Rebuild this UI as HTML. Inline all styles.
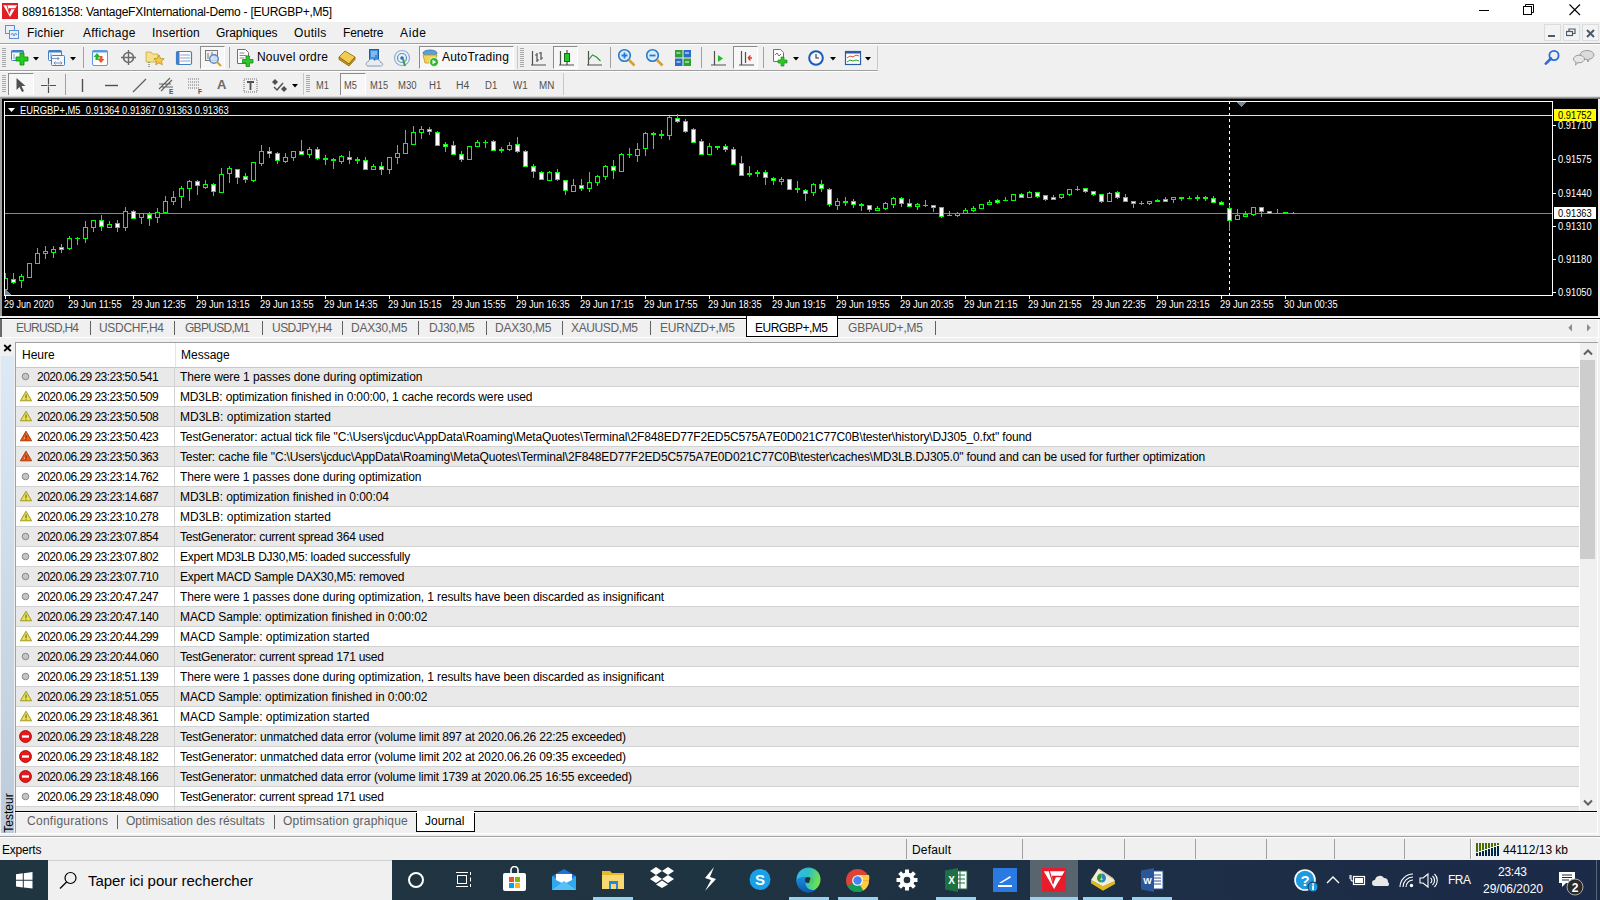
<!DOCTYPE html><html><head><meta charset="utf-8"><title>MT4</title><style>
*{margin:0;padding:0;box-sizing:border-box}
html,body{width:1600px;height:900px;overflow:hidden}
body{position:relative;background:#f0f0f0;font-family:"Liberation Sans",sans-serif;font-size:12px;color:#000}
.a{position:absolute;white-space:nowrap}
.t{position:absolute;white-space:nowrap;line-height:14px}
</style></head><body><div class="a" style="left:0;top:0;width:1600px;height:22px;background:#fff"></div><div class="a" style="left:2px;top:3px;width:16px;height:16px;background:#e31b23"></div><svg class="a" style="left:2px;top:3px" width="16" height="16" viewBox="0 0 24 24"><path d="M1.8 3.2H22.6L12.1 21Z" fill="#fff"/><path d="M9.9 7.8H20.6L19.9 9.3H13.9L11.3 15.8Z" fill="#e31b23"/><path d="M7.3 3L11.2 16" stroke="#e31b23" stroke-width="1.3"/></svg><div class="a" style="left:1479px;top:10px;width:10px;height:1px;background:#000"></div><svg class="a" style="left:1523px;top:4px" width="12" height="12"><rect x="0.5" y="2.5" width="8" height="8" fill="none" stroke="#000"/><path d="M2.5 2.5V0.5H10.5V8.5H8.5" fill="none" stroke="#000"/></svg><svg class="a" style="left:1569px;top:4px" width="12" height="12"><path d="M0.5 0.5L11 11M11 0.5L0.5 11" stroke="#000" stroke-width="1.1"/></svg><div class="a" style="left:0;top:22px;width:1600px;height:21px;background:#f0f0f0"></div><svg class="a" style="left:4px;top:24px" width="16" height="16"><rect x="1.5" y="1.5" width="9" height="8" fill="#e8f0fa" stroke="#5b8fd6"/><rect x="5.5" y="6.5" width="9" height="8" fill="#e8f0fa" stroke="#5b8fd6"/><path d="M7 11 l1.5 -2 l1.5 3 l1.5 -3 l1.5 2" stroke="#5b8fd6" fill="none"/></svg><div class="a" style="left:1544px;top:24px;width:17px;height:17px;border:1px solid #dcdcdc;background:#f3f3f3"></div><div class="a" style="left:1563px;top:24px;width:17px;height:17px;border:1px solid #dcdcdc;background:#f3f3f3"></div><div class="a" style="left:1582px;top:24px;width:17px;height:17px;border:1px solid #dcdcdc;background:#f3f3f3"></div><div class="a" style="left:1548px;top:35px;width:7px;height:2px;background:#4a5a6a"></div><svg class="a" style="left:1566px;top:28px" width="10" height="10"><rect x="0.5" y="3.5" width="6" height="4" fill="none" stroke="#4a5a6a" stroke-width="1.2"/><path d="M3 3.5V1H9V5.5H6.5" fill="none" stroke="#4a5a6a" stroke-width="1.2"/></svg><svg class="a" style="left:1586px;top:29px" width="9" height="9"><path d="M1 1L8 8M8 1L1 8" stroke="#4a5a6a" stroke-width="2"/></svg><div class="a" style="left:0;top:43px;width:1600px;height:1px;background:#a0a0a0"></div><div class="a" style="left:0;top:44px;width:1600px;height:1px;background:#fff"></div><div class="a" style="left:0;top:70px;width:878px;height:1px;background:#a0a0a0"></div><div class="a" style="left:0;top:71px;width:878px;height:1px;background:#fff"></div><div class="t" style="left:22px;top:5px;line-height:14px;letter-spacing:-0.248px;">889161358: VantageFXInternational-Demo - [EURGBP+,M5]</div><div class="t" style="left:27px;top:26px;line-height:14px;letter-spacing:0.164px;">Fichier</div><div class="t" style="left:83px;top:26px;line-height:14px;letter-spacing:0.338px;">Affichage</div><div class="t" style="left:152px;top:26px;line-height:14px;letter-spacing:0.217px;">Insertion</div><div class="t" style="left:216px;top:26px;line-height:14px;letter-spacing:-0.059px;">Graphiques</div><div class="t" style="left:294px;top:26px;line-height:14px;letter-spacing:0.316px;">Outils</div><div class="t" style="left:343px;top:26px;line-height:14px;letter-spacing:-0.141px;">Fenetre</div><div class="t" style="left:400px;top:26px;line-height:14px;letter-spacing:0.661px;">Aide</div><div class="a" style="left:2px;top:48px;width:4px;height:1px;background:#a8a8a8"></div><div class="a" style="left:2px;top:50px;width:4px;height:1px;background:#a8a8a8"></div><div class="a" style="left:2px;top:52px;width:4px;height:1px;background:#a8a8a8"></div><div class="a" style="left:2px;top:54px;width:4px;height:1px;background:#a8a8a8"></div><div class="a" style="left:2px;top:56px;width:4px;height:1px;background:#a8a8a8"></div><div class="a" style="left:2px;top:58px;width:4px;height:1px;background:#a8a8a8"></div><div class="a" style="left:2px;top:60px;width:4px;height:1px;background:#a8a8a8"></div><div class="a" style="left:2px;top:62px;width:4px;height:1px;background:#a8a8a8"></div><div class="a" style="left:2px;top:64px;width:4px;height:1px;background:#a8a8a8"></div><div class="a" style="left:2px;top:66px;width:4px;height:1px;background:#a8a8a8"></div><svg class="a" style="left:10px;top:49px" width="20" height="18" viewBox="0 0 20 18"><rect x="1.5" y="1.5" width="12" height="10" rx="1" fill="#f4f8fc" stroke="#3f7fc6"/><rect x="1.5" y="1.5" width="12" height="2" fill="#3f7fc6"/><path d="M4 5v5" stroke="#8aa0b8"/><path d="M10 4h4v4h4v4h-4v4h-4v-4h-4v-4h4z" fill="#22cc22" stroke="#0a8a0a" stroke-width="0.8"/></svg><svg class="a" style="left:33px;top:57px" width="6" height="4"><path d="M0 0H6L3 3.5Z" fill="#000"/></svg><svg class="a" style="left:47px;top:49px" width="20" height="19" viewBox="0 0 20 19"><rect x="1.5" y="1.5" width="13" height="10" rx="1" fill="#f4f8fc" stroke="#3f7fc6"/><rect x="1.5" y="1.5" width="13" height="2" fill="#3f7fc6"/><rect x="4.5" y="6.5" width="13" height="10" rx="1" fill="#f4f8fc" stroke="#3f7fc6"/><path d="M4 4.5v5M4 9.5h8M10.5 8l1.5 1.5-1.5 1.5M7 14h8M8.5 12.5L7 14l1.5 1.5M13.5 12.5l1.5 1.5-1.5 1.5" stroke="#6a8ab0" fill="none" stroke-width="0.9"/></svg><svg class="a" style="left:70px;top:57px" width="6" height="4"><path d="M0 0H6L3 3.5Z" fill="#000"/></svg><div class="a" style="left:83px;top:47px;width:1px;height:21px;background:#a0a0a0"></div><svg class="a" style="left:91px;top:49px" width="18" height="18" viewBox="0 0 18 18"><rect x="1.5" y="1.5" width="15" height="15" rx="1.5" fill="#fff" stroke="#5a9ae0"/><rect x="1.5" y="1.5" width="15" height="2" fill="#5a9ae0"/><path d="M6 4l3.5 4h-2v3h-3v-3h-2z" fill="#2ab52a"/><path d="M10 14l3.5-4h-2v-3h-3v3h-2z" fill="#e55a2a"/></svg><svg class="a" style="left:120px;top:49px" width="18" height="18" viewBox="0 0 18 18"><circle cx="8.5" cy="8.5" r="5" fill="none" stroke="#6a6a6a" stroke-width="1.6"/><path d="M8.5 1v15M1 8.5h15" stroke="#6a6a6a" stroke-width="1.4"/></svg><svg class="a" style="left:145px;top:49px" width="21" height="19" viewBox="0 0 21 19"><path d="M1 3h5l1.5 2H13v8H1z" fill="#f7e08a" stroke="#c8a83a" stroke-width="0.8"/><path d="M14 6l1.6 3.4 3.6.4-2.7 2.4.8 3.6-3.3-1.9-3.3 1.9.8-3.6-2.7-2.4 3.6-.4z" fill="#f5c84a" stroke="#b8902a" stroke-width="0.8"/><path d="M4 13v5" stroke="#555" stroke-dasharray="1 1"/></svg><svg class="a" style="left:175px;top:50px" width="18" height="17" viewBox="0 0 18 17"><rect x="1.5" y="1.5" width="15" height="13" rx="1.5" fill="#fff" stroke="#3f7fc6" stroke-width="1.2"/><rect x="1.5" y="1.5" width="3" height="13" fill="#3f7fc6"/><path d="M7 5h8M7 8h8M7 11h8" stroke="#7aa6d8"/><path d="M5.5 5h1M5.5 8h1M5.5 11h1" stroke="#d22"/></svg><div class="a" style="left:200px;top:46px;width:25px;height:23px;border-top:1px solid #8c8c8c;border-left:1px solid #8c8c8c;border-right:1px solid #fff;border-bottom:1px solid #fff;background:#f7f7f7"></div><svg class="a" style="left:204px;top:49px" width="19" height="19" viewBox="0 0 19 19"><rect x="1.5" y="1.5" width="12" height="10" fill="#f0f0f0" stroke="#7a7a7a"/><path d="M4 4v6M8 3v5M11 5v5" stroke="#7a7a7a"/><circle cx="10" cy="10" r="4.3" fill="#cfe0f4" fill-opacity="0.8" stroke="#5a8ac8" stroke-width="1.4"/><path d="M13 13l4 4" stroke="#d8a030" stroke-width="2"/></svg><div class="a" style="left:229px;top:47px;width:1px;height:21px;background:#a0a0a0"></div><svg class="a" style="left:236px;top:48px" width="20" height="20" viewBox="0 0 20 20"><path d="M1.5 1.5h8l3 3v11h-11z" fill="#fff" stroke="#707070"/><path d="M3.5 5h5M3.5 7.5h7M3.5 10h5" stroke="#8a8a8a"/><path d="M10 8h3.5v3.5H17V15h-3.5v3.5H10V15H6.5v-3.5H10z" fill="#2ec52e" stroke="#139013" stroke-width="0.8"/></svg><div class="t" style="left:257px;top:50px;line-height:14px;letter-spacing:0.191px;">Nouvel ordre</div><svg class="a" style="left:338px;top:49px" width="18" height="18" viewBox="0 0 18 18"><path d="M1 8l6-6 10 6-6 7z" fill="#f0cc50" stroke="#9a7418" stroke-width="0.9"/><path d="M1 8v2.5l10 6.5 6-6.5V8l-6 7z" fill="#c89420" stroke="#8a6410" stroke-width="0.8"/></svg><svg class="a" style="left:365px;top:48px" width="19" height="19" viewBox="0 0 19 19"><rect x="4.5" y="1.5" width="9" height="10" fill="#3a8ee0" stroke="#1a5eb0"/><path d="M6 4h6M6 6h6M6 8h4" stroke="#cde4fa"/><path d="M3 18c-2.5 0-2.5-4.5 0.5-4.5 0.5-3 5-3.5 6-1 2-2 6-1 6 2 3 0 3 3.5 0 3.5z" fill="#e4ecf4" stroke="#8a9ab0"/></svg><svg class="a" style="left:393px;top:49px" width="19" height="18" viewBox="0 0 19 18"><circle cx="9" cy="9" r="7.5" fill="none" stroke="#8ab0d8" stroke-width="1.2"/><circle cx="9" cy="9" r="4.5" fill="none" stroke="#5a90c8" stroke-width="1.2"/><circle cx="9" cy="9" r="1.8" fill="#2a70b8"/><path d="M10 10l2 7" stroke="#3aa03a" stroke-width="2"/></svg><div class="a" style="left:419px;top:46px;width:95px;height:23px;border-top:1px solid #8c8c8c;border-left:1px solid #8c8c8c;border-right:1px solid #fff;border-bottom:1px solid #fff;background:#f7f7f7"></div><svg class="a" style="left:421px;top:48px" width="19" height="20" viewBox="0 0 19 20"><ellipse cx="9" cy="5" rx="7" ry="3" fill="#5aa0d8" stroke="#3a70a8" stroke-width="0.8"/><path d="M2 7h14l-2 8H4z" fill="#f2d25a" stroke="#b8982a" stroke-width="0.8"/><circle cx="13" cy="14" r="4.5" fill="#2fb82f" stroke="#fff" stroke-width="0.8"/><path d="M11.5 11.8v4.4l3.7-2.2z" fill="#fff"/></svg><div class="t" style="left:442px;top:50px;line-height:14px;letter-spacing:0.188px;">AutoTrading</div><div class="a" style="left:517px;top:46px;width:1px;height:23px;background:#c8c8c8"></div><div class="a" style="left:520px;top:48px;width:4px;height:1px;background:#a8a8a8"></div><div class="a" style="left:520px;top:50px;width:4px;height:1px;background:#a8a8a8"></div><div class="a" style="left:520px;top:52px;width:4px;height:1px;background:#a8a8a8"></div><div class="a" style="left:520px;top:54px;width:4px;height:1px;background:#a8a8a8"></div><div class="a" style="left:520px;top:56px;width:4px;height:1px;background:#a8a8a8"></div><div class="a" style="left:520px;top:58px;width:4px;height:1px;background:#a8a8a8"></div><div class="a" style="left:520px;top:60px;width:4px;height:1px;background:#a8a8a8"></div><div class="a" style="left:520px;top:62px;width:4px;height:1px;background:#a8a8a8"></div><div class="a" style="left:520px;top:64px;width:4px;height:1px;background:#a8a8a8"></div><div class="a" style="left:520px;top:66px;width:4px;height:1px;background:#a8a8a8"></div><svg class="a" style="left:529px;top:49px" width="18" height="18" viewBox="0 0 18 18"><path d="M2 16h15M3.5 2v14" stroke="#505050" stroke-width="1.2"/><path d="M8 4v9M6 6h2M8 11h2M12 3v8M10 4h2M12 9h2" stroke="#505050" stroke-width="1.2"/></svg><div class="a" style="left:553px;top:46px;width:25px;height:23px;border-top:1px solid #8c8c8c;border-left:1px solid #8c8c8c;border-right:1px solid #fff;border-bottom:1px solid #fff;background:#f7f7f7"></div><svg class="a" style="left:557px;top:49px" width="18" height="18" viewBox="0 0 18 18"><path d="M2 16h15M3.5 2v14" stroke="#505050" stroke-width="1.2"/><path d="M10 1v15" stroke="#303030"/><rect x="7.5" y="4.5" width="5" height="8" fill="#22cc22" stroke="#107010"/></svg><svg class="a" style="left:585px;top:49px" width="18" height="18" viewBox="0 0 18 18"><path d="M2 16h15M3.5 2v14" stroke="#505050" stroke-width="1.2"/><path d="M3.5 11l4-5 4 2 4 4" fill="none" stroke="#2a9a2a" stroke-width="1.2"/></svg><div class="a" style="left:610px;top:47px;width:1px;height:21px;background:#a0a0a0"></div><svg class="a" style="left:617px;top:48px" width="20" height="20" viewBox="0 0 20 20"><circle cx="7.5" cy="7.5" r="5.8" fill="#d8ecfc" stroke="#2a7ac8" stroke-width="1.6"/><path d="M4.5 7.5h6M7.5 4.5v6" stroke="#2a7ac8" stroke-width="1.8"/><path d="M12 12l5.5 5.5" stroke="#d8a030" stroke-width="2.6"/></svg><svg class="a" style="left:645px;top:48px" width="20" height="20" viewBox="0 0 20 20"><circle cx="7.5" cy="7.5" r="5.8" fill="#d8ecfc" stroke="#2a7ac8" stroke-width="1.6"/><path d="M4.5 7.5h6" stroke="#2a7ac8" stroke-width="1.8"/><path d="M12 12l5.5 5.5" stroke="#d8a030" stroke-width="2.6"/></svg><svg class="a" style="left:674px;top:49px" width="18" height="18" viewBox="0 0 18 18"><rect x="1" y="1" width="7.5" height="7.5" fill="#2ea02e"/><rect x="9.5" y="1" width="7.5" height="7.5" fill="#2a6ac8"/><rect x="1" y="9.5" width="7.5" height="7.5" fill="#2a6ac8"/><rect x="9.5" y="9.5" width="7.5" height="7.5" fill="#2ea02e"/><path d="M2.5 4h4M11 4h4M2.5 13h4M11 13h4" stroke="#fff"/></svg><div class="a" style="left:701px;top:47px;width:1px;height:21px;background:#a0a0a0"></div><svg class="a" style="left:709px;top:49px" width="18" height="18" viewBox="0 0 18 18"><path d="M2 16h15M5.5 2v14" stroke="#505050" stroke-width="1.2"/><path d="M9 6v7l5-3.5z" fill="#22bb22"/></svg><div class="a" style="left:733px;top:46px;width:25px;height:23px;border-top:1px solid #8c8c8c;border-left:1px solid #8c8c8c;border-right:1px solid #fff;border-bottom:1px solid #fff;background:#f7f7f7"></div><svg class="a" style="left:737px;top:49px" width="18" height="18" viewBox="0 0 18 18"><path d="M2 16h15M4.5 2v14M8.5 3v11" stroke="#505050" stroke-width="1.2"/><path d="M15 9h-4M11 9l2.5-2.5M11 9l2.5 2.5" stroke="#d83a2a" stroke-width="1.3"/></svg><div class="a" style="left:763px;top:47px;width:1px;height:21px;background:#a0a0a0"></div><svg class="a" style="left:771px;top:48px" width="20" height="20" viewBox="0 0 20 20"><path d="M2.5 1.5h7l3 3v9h-10z" fill="#fff" stroke="#707070"/><path d="M4 7l2-2 2 3 2-2" stroke="#707070" fill="none"/><path d="M10 9h3v3h3v3h-3v3h-3v-3h-3v-3h3z" fill="#2ec52e" stroke="#139013" stroke-width="0.7"/></svg><svg class="a" style="left:793px;top:57px" width="6" height="4"><path d="M0 0H6L3 3.5Z" fill="#000"/></svg><svg class="a" style="left:807px;top:49px" width="18" height="18" viewBox="0 0 18 18"><circle cx="9" cy="9" r="7.8" fill="#1a5ab8"/><circle cx="9" cy="9" r="5.8" fill="#f6f8fc"/><path d="M9 5v4h3" stroke="#333" stroke-width="1.1" fill="none"/></svg><svg class="a" style="left:830px;top:57px" width="6" height="4"><path d="M0 0H6L3 3.5Z" fill="#000"/></svg><svg class="a" style="left:844px;top:49px" width="19" height="18" viewBox="0 0 19 18"><rect x="1.5" y="2.5" width="15" height="13" fill="#fff" stroke="#2a5aa8" stroke-width="1.2"/><rect x="1.5" y="2.5" width="15" height="2" fill="#2a5aa8"/><path d="M3 9l3-2 3 1 3-2 3 1" stroke="#d84a3a" fill="none"/><path d="M3 13l3-2 3 1 3-1 3 1" stroke="#2aa02a" fill="none"/></svg><svg class="a" style="left:865px;top:57px" width="6" height="4"><path d="M0 0H6L3 3.5Z" fill="#000"/></svg><div class="a" style="left:877px;top:46px;width:1px;height:23px;background:#c8c8c8"></div><svg class="a" style="left:1544px;top:49px" width="17" height="17" viewBox="0 0 17 17"><circle cx="10" cy="6.5" r="4.6" fill="none" stroke="#2a6ad8" stroke-width="1.8"/><path d="M7 9.5L1.8 14.7" stroke="#2a6ad8" stroke-width="2.6" stroke-linecap="round"/></svg><svg class="a" style="left:1572px;top:49px" width="24" height="17" viewBox="0 0 24 17"><ellipse cx="15" cy="6" rx="7" ry="4.5" fill="#dcdcdc" stroke="#9a9a9a"/><path d="M15 10l1 3 1.5-3.2" fill="#dcdcdc" stroke="#9a9a9a"/><ellipse cx="7" cy="10" rx="5.5" ry="3.8" fill="#e6e6e6" stroke="#9a9a9a"/><path d="M4 13l-0.5 3 2.5-2.4" fill="#e6e6e6" stroke="#9a9a9a"/></svg><div class="a" style="left:2px;top:75px;width:4px;height:1px;background:#a8a8a8"></div><div class="a" style="left:2px;top:77px;width:4px;height:1px;background:#a8a8a8"></div><div class="a" style="left:2px;top:79px;width:4px;height:1px;background:#a8a8a8"></div><div class="a" style="left:2px;top:81px;width:4px;height:1px;background:#a8a8a8"></div><div class="a" style="left:2px;top:83px;width:4px;height:1px;background:#a8a8a8"></div><div class="a" style="left:2px;top:85px;width:4px;height:1px;background:#a8a8a8"></div><div class="a" style="left:2px;top:87px;width:4px;height:1px;background:#a8a8a8"></div><div class="a" style="left:2px;top:89px;width:4px;height:1px;background:#a8a8a8"></div><div class="a" style="left:2px;top:91px;width:4px;height:1px;background:#a8a8a8"></div><div class="a" style="left:8px;top:73px;width:26px;height:23px;border-top:1px solid #8c8c8c;border-left:1px solid #8c8c8c;border-right:1px solid #fff;border-bottom:1px solid #fff;background:#f7f7f7"></div><svg class="a" style="left:15px;top:77px" width="11" height="16" viewBox="0 0 11 16"><path d="M1.5 1v12l3-3 2.5 5 2-1-2.5-5h4z" fill="#505050"/></svg><svg class="a" style="left:40px;top:77px" width="17" height="17" viewBox="0 0 17 17"><path d="M8.5 1v6.5M8.5 9.5v6.5M1 8.5h6.5M9.5 8.5h6.5" stroke="#505050" stroke-width="1.2"/><rect x="8" y="8" width="1" height="1" fill="#505050"/></svg><div class="a" style="left:65px;top:74px;width:1px;height:21px;background:#a0a0a0"></div><svg class="a" style="left:81px;top:78px" width="3" height="15" viewBox="0 0 3 15"><path d="M1.5 1v13" stroke="#505050" stroke-width="1.4"/></svg><svg class="a" style="left:104px;top:84px" width="15" height="3" viewBox="0 0 15 3"><path d="M1 1.5h13" stroke="#505050" stroke-width="1.4"/></svg><svg class="a" style="left:132px;top:78px" width="15" height="15" viewBox="0 0 15 15"><path d="M1 14L14 1" stroke="#606060" stroke-width="1.3"/></svg><svg class="a" style="left:158px;top:76px" width="18" height="19" viewBox="0 0 18 19"><path d="M1 13L12 2M3 15L14 4M1 8h12M3 11h12" stroke="#606060" stroke-width="1.1"/><text x="11" y="18" font-size="6.5" font-weight="bold" fill="#505050" font-family="Liberation Sans">E</text></svg><svg class="a" style="left:187px;top:77px" width="17" height="18" viewBox="0 0 17 18"><path d="M1 2h12M1 5h12M1 8h12M1 11h12" stroke="#707070" stroke-dasharray="1 1"/><text x="11" y="17" font-size="6.5" font-weight="bold" fill="#505050" font-family="Liberation Sans">F</text></svg><div class="t" style="left:217px;top:78px;font-size:13px;font-weight:bold;color:#6a6a6a">A</div><svg class="a" style="left:243px;top:78px" width="16" height="15" viewBox="0 0 16 15"><rect x="1" y="1" width="13" height="13" fill="none" stroke="#707070" stroke-dasharray="1 1"/><path d="M4 4h7M7.5 4v8" stroke="#505050" stroke-width="1.8"/></svg><svg class="a" style="left:271px;top:78px" width="17" height="15" viewBox="0 0 17 15"><path d="M4 1l3 3-3 3-3-3z" fill="#505050"/><path d="M13 8l3 3-3 3-3-3z" fill="#505050"/><path d="M3 9l3 3 6-7" stroke="#505050" stroke-width="1.4" fill="none"/></svg><svg class="a" style="left:292px;top:84px" width="6" height="4"><path d="M0 0H6L3 3.5Z" fill="#000"/></svg><div class="a" style="left:303px;top:73px;width:1px;height:23px;background:#c8c8c8"></div><div class="a" style="left:306px;top:75px;width:4px;height:1px;background:#a8a8a8"></div><div class="a" style="left:306px;top:77px;width:4px;height:1px;background:#a8a8a8"></div><div class="a" style="left:306px;top:79px;width:4px;height:1px;background:#a8a8a8"></div><div class="a" style="left:306px;top:81px;width:4px;height:1px;background:#a8a8a8"></div><div class="a" style="left:306px;top:83px;width:4px;height:1px;background:#a8a8a8"></div><div class="a" style="left:306px;top:85px;width:4px;height:1px;background:#a8a8a8"></div><div class="a" style="left:306px;top:87px;width:4px;height:1px;background:#a8a8a8"></div><div class="a" style="left:306px;top:89px;width:4px;height:1px;background:#a8a8a8"></div><div class="a" style="left:306px;top:91px;width:4px;height:1px;background:#a8a8a8"></div><div class="a" style="left:340px;top:73px;width:26px;height:23px;border-top:1px solid #8c8c8c;border-left:1px solid #8c8c8c;border-right:1px solid #fff;border-bottom:1px solid #fff;background:#f7f7f7"></div><div class="t" style="left:316.0px;top:79px;line-height:14px;font-size:10px;color:#505050;transform:scaleX(0.9287);transform-origin:0 0;">M1</div><div class="t" style="left:344.0px;top:79px;line-height:14px;font-size:10px;color:#505050;transform:scaleX(0.9287);transform-origin:0 0;">M5</div><div class="t" style="left:370.0px;top:79px;line-height:14px;font-size:10px;color:#505050;transform:scaleX(0.9304);transform-origin:0 0;">M15</div><div class="t" style="left:398.0px;top:79px;line-height:14px;font-size:10px;color:#505050;transform:scaleX(0.9510);transform-origin:0 0;">M30</div><div class="t" style="left:429.0px;top:79px;line-height:14px;font-size:10px;color:#505050;transform:scaleX(0.9623);transform-origin:0 0;">H1</div><div class="t" style="left:456.0px;top:79px;line-height:14px;font-size:10px;color:#505050;transform:scaleX(1.0406);transform-origin:0 0;">H4</div><div class="t" style="left:485.0px;top:79px;line-height:14px;font-size:10px;color:#505050;transform:scaleX(0.9623);transform-origin:0 0;">D1</div><div class="t" style="left:512.5px;top:79px;line-height:14px;font-size:10px;color:#505050;transform:scaleX(0.9800);transform-origin:0 0;">W1</div><div class="t" style="left:539.0px;top:79px;line-height:14px;font-size:10px;color:#505050;transform:scaleX(0.9841);transform-origin:0 0;">MN</div><div class="a" style="left:563px;top:73px;width:1px;height:23px;background:#c8c8c8"></div><div class="a" style="left:0;top:95px;width:1600px;height:224px;background:#f0f0f0"></div><div class="a" style="left:0;top:96px;width:1600px;height:1px;background:#dadada"></div><div class="a" style="left:0;top:97px;width:1600px;height:1px;background:#a0a0a0"></div><div class="a" style="left:0;top:98px;width:1600px;height:1px;background:#696969"></div><div class="a" style="left:0;top:97px;width:2px;height:221px;background:#a0a0a0"></div><div class="a" style="left:2px;top:99px;width:1596px;height:218px;background:#000"></div><div class="a" style="left:0;top:318px;width:1600px;height:1px;background:#000"></div><svg class="a" style="left:0;top:0" width="1600" height="320" shape-rendering="crispEdges"><defs><clipPath id="pc"><rect x="5" y="102" width="1547" height="193"/></clipPath></defs><rect x="4" y="101" width="1549" height="1" fill="#fff"/><rect x="4" y="295" width="1549" height="1" fill="#fff"/><rect x="4" y="101" width="1" height="195" fill="#fff"/><rect x="1552" y="101" width="1" height="195" fill="#fff"/><g clip-path="url(#pc)"><rect x="5" y="115" width="1547" height="1" fill="#ffff00"/><rect x="5" y="213" width="1547" height="1" fill="#778899"/><rect x="1229" y="101" width="1" height="3" fill="#fff"/><rect x="1229" y="107" width="1" height="3" fill="#fff"/><rect x="1229" y="113" width="1" height="3" fill="#fff"/><rect x="1229" y="119" width="1" height="3" fill="#fff"/><rect x="1229" y="125" width="1" height="3" fill="#fff"/><rect x="1229" y="131" width="1" height="3" fill="#fff"/><rect x="1229" y="137" width="1" height="3" fill="#fff"/><rect x="1229" y="143" width="1" height="3" fill="#fff"/><rect x="1229" y="149" width="1" height="3" fill="#fff"/><rect x="1229" y="155" width="1" height="3" fill="#fff"/><rect x="1229" y="161" width="1" height="3" fill="#fff"/><rect x="1229" y="167" width="1" height="3" fill="#fff"/><rect x="1229" y="173" width="1" height="3" fill="#fff"/><rect x="1229" y="179" width="1" height="3" fill="#fff"/><rect x="1229" y="185" width="1" height="3" fill="#fff"/><rect x="1229" y="191" width="1" height="3" fill="#fff"/><rect x="1229" y="197" width="1" height="3" fill="#fff"/><rect x="1229" y="203" width="1" height="3" fill="#fff"/><rect x="1229" y="209" width="1" height="3" fill="#fff"/><rect x="1229" y="215" width="1" height="3" fill="#fff"/><rect x="1229" y="221" width="1" height="3" fill="#fff"/><rect x="1229" y="227" width="1" height="3" fill="#fff"/><rect x="1229" y="233" width="1" height="3" fill="#fff"/><rect x="1229" y="239" width="1" height="3" fill="#fff"/><rect x="1229" y="245" width="1" height="3" fill="#fff"/><rect x="1229" y="251" width="1" height="3" fill="#fff"/><rect x="1229" y="257" width="1" height="3" fill="#fff"/><rect x="1229" y="263" width="1" height="3" fill="#fff"/><rect x="1229" y="269" width="1" height="3" fill="#fff"/><rect x="1229" y="275" width="1" height="3" fill="#fff"/><rect x="1229" y="281" width="1" height="3" fill="#fff"/><rect x="1229" y="287" width="1" height="3" fill="#fff"/><rect x="1229" y="293" width="1" height="3" fill="#fff"/><path d="M1236 102H1246L1241 107Z" fill="#778899"/><path d="M5 289V295H11Z" fill="#778899"/><rect x="5" y="273" width="1" height="17" fill="#00ff00"/><rect x="3" y="278" width="5" height="12" fill="#00ff00"/><rect x="4" y="279" width="3" height="10" fill="#000"/><rect x="13" y="273" width="1" height="11" fill="#00ff00"/><rect x="11" y="279" width="5" height="4" fill="#00ff00"/><rect x="12" y="280" width="3" height="2" fill="#fff"/><rect x="21" y="274" width="1" height="14" fill="#00ff00"/><rect x="19" y="276" width="5" height="5" fill="#00ff00"/><rect x="20" y="277" width="3" height="3" fill="#000"/><rect x="29" y="263" width="1" height="15" fill="#00ff00"/><rect x="27" y="263" width="5" height="15" fill="#00ff00"/><rect x="28" y="264" width="3" height="13" fill="#000"/><rect x="37" y="248" width="1" height="16" fill="#00ff00"/><rect x="35" y="253" width="5" height="11" fill="#00ff00"/><rect x="36" y="254" width="3" height="9" fill="#000"/><rect x="45" y="246" width="1" height="13" fill="#00ff00"/><rect x="43" y="251" width="5" height="3" fill="#00ff00"/><rect x="44" y="252" width="3" height="1" fill="#000"/><rect x="53" y="246" width="1" height="12" fill="#00ff00"/><rect x="51" y="249" width="5" height="4" fill="#00ff00"/><rect x="52" y="250" width="3" height="2" fill="#000"/><rect x="61" y="244" width="1" height="9" fill="#00ff00"/><rect x="59" y="247" width="5" height="3" fill="#00ff00"/><rect x="60" y="248" width="3" height="1" fill="#fff"/><rect x="69" y="236" width="1" height="14" fill="#00ff00"/><rect x="67" y="238" width="5" height="11" fill="#00ff00"/><rect x="68" y="239" width="3" height="9" fill="#000"/><rect x="77" y="237" width="1" height="8" fill="#00ff00"/><rect x="75" y="238" width="5" height="1" fill="#00ff00"/><rect x="85" y="221" width="1" height="22" fill="#00ff00"/><rect x="83" y="227" width="5" height="12" fill="#00ff00"/><rect x="84" y="228" width="3" height="10" fill="#000"/><rect x="93" y="220" width="1" height="12" fill="#00ff00"/><rect x="91" y="220" width="5" height="8" fill="#00ff00"/><rect x="92" y="221" width="3" height="6" fill="#000"/><rect x="101" y="215" width="1" height="16" fill="#00ff00"/><rect x="99" y="220" width="5" height="7" fill="#00ff00"/><rect x="100" y="221" width="3" height="5" fill="#fff"/><rect x="109" y="221" width="1" height="7" fill="#00ff00"/><rect x="107" y="224" width="5" height="4" fill="#00ff00"/><rect x="108" y="225" width="3" height="2" fill="#000"/><rect x="117" y="220" width="1" height="12" fill="#00ff00"/><rect x="115" y="223" width="5" height="5" fill="#00ff00"/><rect x="116" y="224" width="3" height="3" fill="#fff"/><rect x="125" y="207" width="1" height="24" fill="#00ff00"/><rect x="123" y="211" width="5" height="17" fill="#00ff00"/><rect x="124" y="212" width="3" height="15" fill="#000"/><rect x="133" y="210" width="1" height="9" fill="#00ff00"/><rect x="131" y="211" width="5" height="8" fill="#00ff00"/><rect x="132" y="212" width="3" height="6" fill="#fff"/><rect x="141" y="213" width="1" height="11" fill="#00ff00"/><rect x="139" y="213" width="5" height="5" fill="#00ff00"/><rect x="140" y="214" width="3" height="3" fill="#000"/><rect x="149" y="212" width="1" height="14" fill="#00ff00"/><rect x="147" y="214" width="5" height="5" fill="#00ff00"/><rect x="148" y="215" width="3" height="3" fill="#fff"/><rect x="157" y="208" width="1" height="15" fill="#00ff00"/><rect x="155" y="212" width="5" height="6" fill="#00ff00"/><rect x="156" y="213" width="3" height="4" fill="#000"/><rect x="165" y="196" width="1" height="17" fill="#00ff00"/><rect x="163" y="201" width="5" height="12" fill="#00ff00"/><rect x="164" y="202" width="3" height="10" fill="#000"/><rect x="173" y="191" width="1" height="14" fill="#00ff00"/><rect x="171" y="197" width="5" height="5" fill="#00ff00"/><rect x="172" y="198" width="3" height="3" fill="#000"/><rect x="181" y="186" width="1" height="22" fill="#00ff00"/><rect x="179" y="188" width="5" height="9" fill="#00ff00"/><rect x="180" y="189" width="3" height="7" fill="#000"/><rect x="189" y="180" width="1" height="21" fill="#00ff00"/><rect x="187" y="181" width="5" height="8" fill="#00ff00"/><rect x="188" y="182" width="3" height="6" fill="#000"/><rect x="197" y="180" width="1" height="15" fill="#00ff00"/><rect x="195" y="181" width="5" height="5" fill="#00ff00"/><rect x="196" y="182" width="3" height="3" fill="#fff"/><rect x="205" y="180" width="1" height="9" fill="#00ff00"/><rect x="203" y="184" width="5" height="4" fill="#00ff00"/><rect x="204" y="185" width="3" height="2" fill="#000"/><rect x="213" y="183" width="1" height="13" fill="#00ff00"/><rect x="211" y="184" width="5" height="8" fill="#00ff00"/><rect x="212" y="185" width="3" height="6" fill="#fff"/><rect x="221" y="168" width="1" height="25" fill="#00ff00"/><rect x="219" y="174" width="5" height="19" fill="#00ff00"/><rect x="220" y="175" width="3" height="17" fill="#000"/><rect x="229" y="166" width="1" height="17" fill="#00ff00"/><rect x="227" y="168" width="5" height="6" fill="#00ff00"/><rect x="228" y="169" width="3" height="4" fill="#000"/><rect x="237" y="169" width="1" height="15" fill="#00ff00"/><rect x="235" y="169" width="5" height="9" fill="#00ff00"/><rect x="236" y="170" width="3" height="7" fill="#fff"/><rect x="245" y="173" width="1" height="10" fill="#00ff00"/><rect x="243" y="176" width="5" height="4" fill="#00ff00"/><rect x="244" y="177" width="3" height="2" fill="#fff"/><rect x="253" y="162" width="1" height="20" fill="#00ff00"/><rect x="251" y="162" width="5" height="19" fill="#00ff00"/><rect x="252" y="163" width="3" height="17" fill="#000"/><rect x="261" y="145" width="1" height="21" fill="#00ff00"/><rect x="259" y="151" width="5" height="13" fill="#00ff00"/><rect x="260" y="152" width="3" height="11" fill="#000"/><rect x="269" y="147" width="1" height="11" fill="#00ff00"/><rect x="267" y="151" width="5" height="3" fill="#00ff00"/><rect x="268" y="152" width="3" height="1" fill="#fff"/><rect x="277" y="152" width="1" height="12" fill="#00ff00"/><rect x="275" y="153" width="5" height="8" fill="#00ff00"/><rect x="276" y="154" width="3" height="6" fill="#fff"/><rect x="285" y="153" width="1" height="10" fill="#00ff00"/><rect x="283" y="157" width="5" height="5" fill="#00ff00"/><rect x="284" y="158" width="3" height="3" fill="#000"/><rect x="293" y="151" width="1" height="10" fill="#00ff00"/><rect x="291" y="151" width="5" height="7" fill="#00ff00"/><rect x="292" y="152" width="3" height="5" fill="#000"/><rect x="301" y="140" width="1" height="15" fill="#00ff00"/><rect x="299" y="151" width="5" height="4" fill="#00ff00"/><rect x="300" y="152" width="3" height="2" fill="#fff"/><rect x="309" y="147" width="1" height="11" fill="#00ff00"/><rect x="307" y="149" width="5" height="6" fill="#00ff00"/><rect x="308" y="150" width="3" height="4" fill="#000"/><rect x="317" y="147" width="1" height="13" fill="#00ff00"/><rect x="315" y="149" width="5" height="10" fill="#00ff00"/><rect x="316" y="150" width="3" height="8" fill="#fff"/><rect x="325" y="155" width="1" height="10" fill="#00ff00"/><rect x="323" y="158" width="5" height="2" fill="#00ff00"/><rect x="333" y="158" width="1" height="11" fill="#00ff00"/><rect x="331" y="159" width="5" height="2" fill="#00ff00"/><rect x="341" y="155" width="1" height="9" fill="#00ff00"/><rect x="339" y="156" width="5" height="6" fill="#00ff00"/><rect x="340" y="157" width="3" height="4" fill="#000"/><rect x="349" y="151" width="1" height="13" fill="#00ff00"/><rect x="347" y="157" width="5" height="3" fill="#00ff00"/><rect x="348" y="158" width="3" height="1" fill="#fff"/><rect x="357" y="157" width="1" height="7" fill="#00ff00"/><rect x="355" y="159" width="5" height="2" fill="#00ff00"/><rect x="365" y="157" width="1" height="13" fill="#00ff00"/><rect x="363" y="160" width="5" height="10" fill="#00ff00"/><rect x="364" y="161" width="3" height="8" fill="#fff"/><rect x="373" y="164" width="1" height="6" fill="#00ff00"/><rect x="371" y="166" width="5" height="4" fill="#00ff00"/><rect x="372" y="167" width="3" height="2" fill="#000"/><rect x="381" y="162" width="1" height="13" fill="#00ff00"/><rect x="379" y="166" width="5" height="4" fill="#00ff00"/><rect x="380" y="167" width="3" height="2" fill="#fff"/><rect x="389" y="157" width="1" height="17" fill="#00ff00"/><rect x="387" y="157" width="5" height="13" fill="#00ff00"/><rect x="388" y="158" width="3" height="11" fill="#000"/><rect x="397" y="145" width="1" height="19" fill="#00ff00"/><rect x="395" y="153" width="5" height="5" fill="#00ff00"/><rect x="396" y="154" width="3" height="3" fill="#000"/><rect x="405" y="130" width="1" height="24" fill="#00ff00"/><rect x="403" y="143" width="5" height="11" fill="#00ff00"/><rect x="404" y="144" width="3" height="9" fill="#000"/><rect x="413" y="126" width="1" height="19" fill="#00ff00"/><rect x="411" y="132" width="5" height="13" fill="#00ff00"/><rect x="412" y="133" width="3" height="11" fill="#000"/><rect x="421" y="126" width="1" height="13" fill="#00ff00"/><rect x="419" y="129" width="5" height="4" fill="#00ff00"/><rect x="420" y="130" width="3" height="2" fill="#000"/><rect x="429" y="127" width="1" height="8" fill="#00ff00"/><rect x="427" y="129" width="5" height="3" fill="#00ff00"/><rect x="428" y="130" width="3" height="1" fill="#fff"/><rect x="437" y="131" width="1" height="15" fill="#00ff00"/><rect x="435" y="132" width="5" height="14" fill="#00ff00"/><rect x="436" y="133" width="3" height="12" fill="#fff"/><rect x="445" y="142" width="1" height="10" fill="#00ff00"/><rect x="443" y="144" width="5" height="3" fill="#00ff00"/><rect x="444" y="145" width="3" height="1" fill="#fff"/><rect x="453" y="141" width="1" height="14" fill="#00ff00"/><rect x="451" y="145" width="5" height="10" fill="#00ff00"/><rect x="452" y="146" width="3" height="8" fill="#fff"/><rect x="461" y="151" width="1" height="11" fill="#00ff00"/><rect x="459" y="154" width="5" height="6" fill="#00ff00"/><rect x="460" y="155" width="3" height="4" fill="#fff"/><rect x="469" y="146" width="1" height="14" fill="#00ff00"/><rect x="467" y="146" width="5" height="14" fill="#00ff00"/><rect x="468" y="147" width="3" height="12" fill="#000"/><rect x="477" y="140" width="1" height="7" fill="#00ff00"/><rect x="475" y="142" width="5" height="5" fill="#00ff00"/><rect x="476" y="143" width="3" height="3" fill="#000"/><rect x="485" y="140" width="1" height="8" fill="#00ff00"/><rect x="483" y="142" width="5" height="1" fill="#00ff00"/><rect x="493" y="140" width="1" height="11" fill="#00ff00"/><rect x="491" y="141" width="5" height="10" fill="#00ff00"/><rect x="492" y="142" width="3" height="8" fill="#fff"/><rect x="501" y="147" width="1" height="6" fill="#00ff00"/><rect x="499" y="149" width="5" height="2" fill="#00ff00"/><rect x="509" y="142" width="1" height="9" fill="#00ff00"/><rect x="507" y="145" width="5" height="5" fill="#00ff00"/><rect x="508" y="146" width="3" height="3" fill="#000"/><rect x="517" y="137" width="1" height="16" fill="#00ff00"/><rect x="515" y="144" width="5" height="8" fill="#00ff00"/><rect x="516" y="145" width="3" height="6" fill="#fff"/><rect x="525" y="150" width="1" height="17" fill="#00ff00"/><rect x="523" y="151" width="5" height="16" fill="#00ff00"/><rect x="524" y="152" width="3" height="14" fill="#fff"/><rect x="533" y="164" width="1" height="14" fill="#00ff00"/><rect x="531" y="166" width="5" height="6" fill="#00ff00"/><rect x="532" y="167" width="3" height="4" fill="#fff"/><rect x="541" y="171" width="1" height="9" fill="#00ff00"/><rect x="539" y="172" width="5" height="8" fill="#00ff00"/><rect x="540" y="173" width="3" height="6" fill="#fff"/><rect x="549" y="171" width="1" height="10" fill="#00ff00"/><rect x="547" y="172" width="5" height="9" fill="#00ff00"/><rect x="548" y="173" width="3" height="7" fill="#000"/><rect x="557" y="169" width="1" height="12" fill="#00ff00"/><rect x="555" y="172" width="5" height="8" fill="#00ff00"/><rect x="556" y="173" width="3" height="6" fill="#fff"/><rect x="565" y="180" width="1" height="15" fill="#00ff00"/><rect x="563" y="180" width="5" height="11" fill="#00ff00"/><rect x="564" y="181" width="3" height="9" fill="#fff"/><rect x="573" y="179" width="1" height="13" fill="#00ff00"/><rect x="571" y="185" width="5" height="7" fill="#00ff00"/><rect x="572" y="186" width="3" height="5" fill="#000"/><rect x="581" y="179" width="1" height="12" fill="#00ff00"/><rect x="579" y="185" width="5" height="4" fill="#00ff00"/><rect x="580" y="186" width="3" height="2" fill="#fff"/><rect x="589" y="172" width="1" height="20" fill="#00ff00"/><rect x="587" y="182" width="5" height="7" fill="#00ff00"/><rect x="588" y="183" width="3" height="5" fill="#000"/><rect x="597" y="175" width="1" height="11" fill="#00ff00"/><rect x="595" y="176" width="5" height="7" fill="#00ff00"/><rect x="596" y="177" width="3" height="5" fill="#000"/><rect x="605" y="165" width="1" height="15" fill="#00ff00"/><rect x="603" y="166" width="5" height="11" fill="#00ff00"/><rect x="604" y="167" width="3" height="9" fill="#000"/><rect x="613" y="160" width="1" height="19" fill="#00ff00"/><rect x="611" y="166" width="5" height="5" fill="#00ff00"/><rect x="612" y="167" width="3" height="3" fill="#fff"/><rect x="621" y="153" width="1" height="19" fill="#00ff00"/><rect x="619" y="154" width="5" height="18" fill="#00ff00"/><rect x="620" y="155" width="3" height="16" fill="#000"/><rect x="629" y="148" width="1" height="10" fill="#00ff00"/><rect x="627" y="154" width="5" height="1" fill="#00ff00"/><rect x="637" y="143" width="1" height="19" fill="#00ff00"/><rect x="635" y="149" width="5" height="7" fill="#00ff00"/><rect x="636" y="150" width="3" height="5" fill="#000"/><rect x="645" y="132" width="1" height="24" fill="#00ff00"/><rect x="643" y="133" width="5" height="16" fill="#00ff00"/><rect x="644" y="134" width="3" height="14" fill="#000"/><rect x="653" y="132" width="1" height="17" fill="#00ff00"/><rect x="651" y="133" width="5" height="2" fill="#00ff00"/><rect x="661" y="130" width="1" height="9" fill="#00ff00"/><rect x="659" y="134" width="5" height="2" fill="#00ff00"/><rect x="669" y="116" width="1" height="24" fill="#00ff00"/><rect x="667" y="117" width="5" height="19" fill="#00ff00"/><rect x="668" y="118" width="3" height="17" fill="#000"/><rect x="677" y="114" width="1" height="9" fill="#00ff00"/><rect x="675" y="118" width="5" height="4" fill="#00ff00"/><rect x="676" y="119" width="3" height="2" fill="#fff"/><rect x="685" y="119" width="1" height="14" fill="#00ff00"/><rect x="683" y="121" width="5" height="11" fill="#00ff00"/><rect x="684" y="122" width="3" height="9" fill="#fff"/><rect x="693" y="128" width="1" height="15" fill="#00ff00"/><rect x="691" y="129" width="5" height="14" fill="#00ff00"/><rect x="692" y="130" width="3" height="12" fill="#fff"/><rect x="701" y="139" width="1" height="16" fill="#00ff00"/><rect x="699" y="141" width="5" height="14" fill="#00ff00"/><rect x="700" y="142" width="3" height="12" fill="#fff"/><rect x="709" y="143" width="1" height="12" fill="#00ff00"/><rect x="707" y="146" width="5" height="9" fill="#00ff00"/><rect x="708" y="147" width="3" height="7" fill="#000"/><rect x="717" y="146" width="1" height="4" fill="#00ff00"/><rect x="715" y="146" width="5" height="2" fill="#00ff00"/><rect x="725" y="144" width="1" height="8" fill="#00ff00"/><rect x="723" y="146" width="5" height="4" fill="#00ff00"/><rect x="724" y="147" width="3" height="2" fill="#fff"/><rect x="733" y="147" width="1" height="18" fill="#00ff00"/><rect x="731" y="149" width="5" height="16" fill="#00ff00"/><rect x="732" y="150" width="3" height="14" fill="#fff"/><rect x="741" y="156" width="1" height="20" fill="#00ff00"/><rect x="739" y="163" width="5" height="13" fill="#00ff00"/><rect x="740" y="164" width="3" height="11" fill="#fff"/><rect x="749" y="166" width="1" height="11" fill="#00ff00"/><rect x="747" y="173" width="5" height="2" fill="#00ff00"/><rect x="757" y="170" width="1" height="7" fill="#00ff00"/><rect x="755" y="172" width="5" height="2" fill="#00ff00"/><rect x="765" y="170" width="1" height="15" fill="#00ff00"/><rect x="763" y="172" width="5" height="6" fill="#00ff00"/><rect x="764" y="173" width="3" height="4" fill="#fff"/><rect x="773" y="177" width="1" height="8" fill="#00ff00"/><rect x="771" y="178" width="5" height="3" fill="#00ff00"/><rect x="772" y="179" width="3" height="1" fill="#fff"/><rect x="781" y="177" width="1" height="8" fill="#00ff00"/><rect x="779" y="179" width="5" height="3" fill="#00ff00"/><rect x="780" y="180" width="3" height="1" fill="#000"/><rect x="789" y="179" width="1" height="11" fill="#00ff00"/><rect x="787" y="179" width="5" height="11" fill="#00ff00"/><rect x="788" y="180" width="3" height="9" fill="#fff"/><rect x="797" y="181" width="1" height="12" fill="#00ff00"/><rect x="795" y="188" width="5" height="2" fill="#00ff00"/><rect x="805" y="189" width="1" height="12" fill="#00ff00"/><rect x="803" y="190" width="5" height="4" fill="#00ff00"/><rect x="804" y="191" width="3" height="2" fill="#fff"/><rect x="813" y="183" width="1" height="13" fill="#00ff00"/><rect x="811" y="184" width="5" height="9" fill="#00ff00"/><rect x="812" y="185" width="3" height="7" fill="#000"/><rect x="821" y="180" width="1" height="12" fill="#00ff00"/><rect x="819" y="184" width="5" height="5" fill="#00ff00"/><rect x="820" y="185" width="3" height="3" fill="#fff"/><rect x="829" y="188" width="1" height="19" fill="#00ff00"/><rect x="827" y="189" width="5" height="16" fill="#00ff00"/><rect x="828" y="190" width="3" height="14" fill="#fff"/><rect x="837" y="198" width="1" height="12" fill="#00ff00"/><rect x="835" y="201" width="5" height="5" fill="#00ff00"/><rect x="836" y="202" width="3" height="3" fill="#000"/><rect x="845" y="197" width="1" height="9" fill="#00ff00"/><rect x="843" y="201" width="5" height="2" fill="#00ff00"/><rect x="853" y="199" width="1" height="9" fill="#00ff00"/><rect x="851" y="201" width="5" height="4" fill="#00ff00"/><rect x="852" y="202" width="3" height="2" fill="#fff"/><rect x="861" y="203" width="1" height="8" fill="#00ff00"/><rect x="859" y="204" width="5" height="2" fill="#00ff00"/><rect x="869" y="205" width="1" height="7" fill="#00ff00"/><rect x="867" y="205" width="5" height="5" fill="#00ff00"/><rect x="868" y="206" width="3" height="3" fill="#fff"/><rect x="877" y="206" width="1" height="5" fill="#00ff00"/><rect x="875" y="208" width="5" height="3" fill="#00ff00"/><rect x="876" y="209" width="3" height="1" fill="#000"/><rect x="885" y="202" width="1" height="8" fill="#00ff00"/><rect x="883" y="203" width="5" height="6" fill="#00ff00"/><rect x="884" y="204" width="3" height="4" fill="#000"/><rect x="893" y="197" width="1" height="11" fill="#00ff00"/><rect x="891" y="198" width="5" height="7" fill="#00ff00"/><rect x="892" y="199" width="3" height="5" fill="#000"/><rect x="901" y="197" width="1" height="10" fill="#00ff00"/><rect x="899" y="198" width="5" height="6" fill="#00ff00"/><rect x="900" y="199" width="3" height="4" fill="#fff"/><rect x="909" y="199" width="1" height="8" fill="#00ff00"/><rect x="907" y="203" width="5" height="4" fill="#00ff00"/><rect x="908" y="204" width="3" height="2" fill="#fff"/><rect x="917" y="203" width="1" height="7" fill="#00ff00"/><rect x="915" y="204" width="5" height="3" fill="#00ff00"/><rect x="916" y="205" width="3" height="1" fill="#000"/><rect x="925" y="200" width="1" height="7" fill="#00ff00"/><rect x="923" y="205" width="5" height="1" fill="#00ff00"/><rect x="933" y="205" width="1" height="7" fill="#00ff00"/><rect x="931" y="205" width="5" height="3" fill="#00ff00"/><rect x="932" y="206" width="3" height="1" fill="#fff"/><rect x="941" y="207" width="1" height="11" fill="#00ff00"/><rect x="939" y="207" width="5" height="10" fill="#00ff00"/><rect x="940" y="208" width="3" height="8" fill="#fff"/><rect x="949" y="211" width="1" height="5" fill="#00ff00"/><rect x="947" y="215" width="5" height="1" fill="#00ff00"/><rect x="957" y="212" width="1" height="5" fill="#00ff00"/><rect x="955" y="213" width="5" height="3" fill="#00ff00"/><rect x="956" y="214" width="3" height="1" fill="#000"/><rect x="965" y="208" width="1" height="6" fill="#00ff00"/><rect x="963" y="210" width="5" height="4" fill="#00ff00"/><rect x="964" y="211" width="3" height="2" fill="#000"/><rect x="973" y="206" width="1" height="6" fill="#00ff00"/><rect x="971" y="208" width="5" height="3" fill="#00ff00"/><rect x="972" y="209" width="3" height="1" fill="#000"/><rect x="981" y="204" width="1" height="5" fill="#00ff00"/><rect x="979" y="204" width="5" height="5" fill="#00ff00"/><rect x="980" y="205" width="3" height="3" fill="#000"/><rect x="989" y="200" width="1" height="5" fill="#00ff00"/><rect x="987" y="202" width="5" height="3" fill="#00ff00"/><rect x="988" y="203" width="3" height="1" fill="#000"/><rect x="997" y="199" width="1" height="5" fill="#00ff00"/><rect x="995" y="200" width="5" height="3" fill="#00ff00"/><rect x="996" y="201" width="3" height="1" fill="#fff"/><rect x="1005" y="197" width="1" height="4" fill="#00ff00"/><rect x="1003" y="200" width="5" height="1" fill="#00ff00"/><rect x="1013" y="194" width="1" height="7" fill="#00ff00"/><rect x="1011" y="194" width="5" height="7" fill="#00ff00"/><rect x="1012" y="195" width="3" height="5" fill="#000"/><rect x="1021" y="193" width="1" height="5" fill="#00ff00"/><rect x="1019" y="194" width="5" height="4" fill="#00ff00"/><rect x="1020" y="195" width="3" height="2" fill="#fff"/><rect x="1029" y="191" width="1" height="7" fill="#00ff00"/><rect x="1027" y="192" width="5" height="6" fill="#00ff00"/><rect x="1028" y="193" width="3" height="4" fill="#000"/><rect x="1037" y="192" width="1" height="6" fill="#00ff00"/><rect x="1035" y="192" width="5" height="5" fill="#00ff00"/><rect x="1036" y="193" width="3" height="3" fill="#fff"/><rect x="1045" y="195" width="1" height="6" fill="#00ff00"/><rect x="1043" y="195" width="5" height="5" fill="#00ff00"/><rect x="1044" y="196" width="3" height="3" fill="#fff"/><rect x="1053" y="195" width="1" height="5" fill="#00ff00"/><rect x="1051" y="197" width="5" height="3" fill="#00ff00"/><rect x="1052" y="198" width="3" height="1" fill="#fff"/><rect x="1061" y="194" width="1" height="5" fill="#00ff00"/><rect x="1059" y="194" width="5" height="4" fill="#00ff00"/><rect x="1060" y="195" width="3" height="2" fill="#000"/><rect x="1069" y="189" width="1" height="7" fill="#00ff00"/><rect x="1067" y="189" width="5" height="6" fill="#00ff00"/><rect x="1068" y="190" width="3" height="4" fill="#000"/><rect x="1077" y="186" width="1" height="5" fill="#00ff00"/><rect x="1075" y="189" width="5" height="1" fill="#00ff00"/><rect x="1085" y="188" width="1" height="5" fill="#00ff00"/><rect x="1083" y="188" width="5" height="4" fill="#00ff00"/><rect x="1084" y="189" width="3" height="2" fill="#fff"/><rect x="1093" y="191" width="1" height="5" fill="#00ff00"/><rect x="1091" y="191" width="5" height="4" fill="#00ff00"/><rect x="1092" y="192" width="3" height="2" fill="#fff"/><rect x="1101" y="194" width="1" height="9" fill="#00ff00"/><rect x="1099" y="194" width="5" height="8" fill="#00ff00"/><rect x="1100" y="195" width="3" height="6" fill="#fff"/><rect x="1109" y="192" width="1" height="10" fill="#00ff00"/><rect x="1107" y="193" width="5" height="9" fill="#00ff00"/><rect x="1108" y="194" width="3" height="7" fill="#000"/><rect x="1117" y="191" width="1" height="8" fill="#00ff00"/><rect x="1115" y="192" width="5" height="6" fill="#00ff00"/><rect x="1116" y="193" width="3" height="4" fill="#fff"/><rect x="1125" y="194" width="1" height="8" fill="#00ff00"/><rect x="1123" y="197" width="5" height="5" fill="#00ff00"/><rect x="1124" y="198" width="3" height="3" fill="#fff"/><rect x="1133" y="201" width="1" height="7" fill="#00ff00"/><rect x="1131" y="201" width="5" height="3" fill="#00ff00"/><rect x="1132" y="202" width="3" height="1" fill="#fff"/><rect x="1141" y="201" width="1" height="4" fill="#00ff00"/><rect x="1139" y="203" width="5" height="1" fill="#00ff00"/><rect x="1149" y="201" width="1" height="4" fill="#00ff00"/><rect x="1147" y="201" width="5" height="3" fill="#00ff00"/><rect x="1148" y="202" width="3" height="1" fill="#000"/><rect x="1157" y="199" width="1" height="3" fill="#00ff00"/><rect x="1155" y="200" width="5" height="2" fill="#00ff00"/><rect x="1165" y="197" width="1" height="5" fill="#00ff00"/><rect x="1163" y="199" width="5" height="3" fill="#00ff00"/><rect x="1164" y="200" width="3" height="1" fill="#fff"/><rect x="1173" y="197" width="1" height="6" fill="#00ff00"/><rect x="1171" y="197" width="5" height="3" fill="#00ff00"/><rect x="1172" y="198" width="3" height="1" fill="#000"/><rect x="1181" y="197" width="1" height="4" fill="#00ff00"/><rect x="1179" y="197" width="5" height="2" fill="#00ff00"/><rect x="1189" y="196" width="1" height="3" fill="#00ff00"/><rect x="1187" y="198" width="5" height="1" fill="#00ff00"/><rect x="1197" y="195" width="1" height="6" fill="#00ff00"/><rect x="1195" y="197" width="5" height="2" fill="#00ff00"/><rect x="1205" y="196" width="1" height="5" fill="#00ff00"/><rect x="1203" y="197" width="5" height="2" fill="#00ff00"/><rect x="1213" y="196" width="1" height="7" fill="#00ff00"/><rect x="1211" y="198" width="5" height="5" fill="#00ff00"/><rect x="1212" y="199" width="3" height="3" fill="#fff"/><rect x="1221" y="201" width="1" height="4" fill="#00ff00"/><rect x="1219" y="202" width="5" height="3" fill="#00ff00"/><rect x="1220" y="203" width="3" height="1" fill="#fff"/><rect x="1229" y="205" width="1" height="26" fill="#00ff00"/><rect x="1227" y="208" width="5" height="13" fill="#00ff00"/><rect x="1228" y="209" width="3" height="11" fill="#fff"/><rect x="1237" y="209" width="1" height="11" fill="#00ff00"/><rect x="1235" y="215" width="5" height="5" fill="#00ff00"/><rect x="1236" y="216" width="3" height="3" fill="#000"/><rect x="1245" y="211" width="1" height="6" fill="#00ff00"/><rect x="1243" y="214" width="5" height="3" fill="#00ff00"/><rect x="1244" y="215" width="3" height="1" fill="#000"/><rect x="1253" y="207" width="1" height="9" fill="#00ff00"/><rect x="1251" y="207" width="5" height="8" fill="#00ff00"/><rect x="1252" y="208" width="3" height="6" fill="#000"/><rect x="1261" y="207" width="1" height="10" fill="#00ff00"/><rect x="1259" y="207" width="5" height="5" fill="#00ff00"/><rect x="1260" y="208" width="3" height="3" fill="#fff"/><rect x="1269" y="211" width="1" height="3" fill="#00ff00"/><rect x="1267" y="211" width="5" height="3" fill="#00ff00"/><rect x="1268" y="212" width="3" height="1" fill="#fff"/><rect x="1277" y="209" width="1" height="5" fill="#00ff00"/><rect x="1275" y="213" width="5" height="1" fill="#00ff00"/><rect x="1285" y="212" width="1" height="2" fill="#00ff00"/><rect x="1283" y="212" width="5" height="2" fill="#00ff00"/><rect x="1293" y="212" width="1" height="2" fill="#00ff00"/><rect x="1291" y="213" width="5" height="1" fill="#00ff00"/></g><rect x="5" y="296" width="1" height="3" fill="#fff"/><rect x="69" y="296" width="1" height="3" fill="#fff"/><rect x="133" y="296" width="1" height="3" fill="#fff"/><rect x="197" y="296" width="1" height="3" fill="#fff"/><rect x="261" y="296" width="1" height="3" fill="#fff"/><rect x="325" y="296" width="1" height="3" fill="#fff"/><rect x="389" y="296" width="1" height="3" fill="#fff"/><rect x="453" y="296" width="1" height="3" fill="#fff"/><rect x="517" y="296" width="1" height="3" fill="#fff"/><rect x="581" y="296" width="1" height="3" fill="#fff"/><rect x="645" y="296" width="1" height="3" fill="#fff"/><rect x="709" y="296" width="1" height="3" fill="#fff"/><rect x="773" y="296" width="1" height="3" fill="#fff"/><rect x="837" y="296" width="1" height="3" fill="#fff"/><rect x="901" y="296" width="1" height="3" fill="#fff"/><rect x="965" y="296" width="1" height="3" fill="#fff"/><rect x="1029" y="296" width="1" height="3" fill="#fff"/><rect x="1093" y="296" width="1" height="3" fill="#fff"/><rect x="1157" y="296" width="1" height="3" fill="#fff"/><rect x="1221" y="296" width="1" height="3" fill="#fff"/><rect x="1285" y="296" width="1" height="3" fill="#fff"/><rect x="1553" y="125" width="3" height="1" fill="#fff"/><rect x="1553" y="159" width="3" height="1" fill="#fff"/><rect x="1553" y="193" width="3" height="1" fill="#fff"/><rect x="1553" y="226" width="3" height="1" fill="#fff"/><rect x="1553" y="259" width="3" height="1" fill="#fff"/><rect x="1553" y="292" width="3" height="1" fill="#fff"/><rect x="1554" y="109" width="42" height="12" fill="#ffff00"/><rect x="1554" y="207" width="42" height="12" fill="#fff"/></svg><svg class="a" style="left:8px;top:108px" width="8" height="5"><path d="M0 0H7L3.5 4Z" fill="#fff"/></svg><div class="t" style="left:20px;top:104px;line-height:14px;font-size:10px;color:#fff;transform:scaleX(0.9347);transform-origin:0 0;">EURGBP+,M5  0.91364 0.91367 0.91363 0.91363</div><div class="t" style="left:1558px;top:119px;line-height:14px;font-size:10px;color:#fff;transform:scaleX(0.9321);transform-origin:0 0;">0.91710</div><div class="t" style="left:1558px;top:153px;line-height:14px;font-size:10px;color:#fff;transform:scaleX(0.9321);transform-origin:0 0;">0.91575</div><div class="t" style="left:1558px;top:187px;line-height:14px;font-size:10px;color:#fff;transform:scaleX(0.9321);transform-origin:0 0;">0.91440</div><div class="t" style="left:1558px;top:220px;line-height:14px;font-size:10px;color:#fff;transform:scaleX(0.9321);transform-origin:0 0;">0.91310</div><div class="t" style="left:1558px;top:253px;line-height:14px;font-size:10px;color:#fff;transform:scaleX(0.9514);transform-origin:0 0;">0.91180</div><div class="t" style="left:1558px;top:286px;line-height:14px;font-size:10px;color:#fff;transform:scaleX(0.9321);transform-origin:0 0;">0.91050</div><div class="t" style="left:1558px;top:109px;line-height:14px;font-size:10px;transform:scaleX(0.9321);transform-origin:0 0;">0.91752</div><div class="t" style="left:1558px;top:207px;line-height:14px;font-size:10px;transform:scaleX(0.9321);transform-origin:0 0;">0.91363</div><div class="t" style="left:4px;top:298px;line-height:14px;font-size:10px;color:#fff;transform:scaleX(0.9026);transform-origin:0 0;">29 Jun 2020</div><div class="t" style="left:68px;top:298px;line-height:14px;font-size:10px;color:#fff;transform:scaleX(0.9403);transform-origin:0 0;">29 Jun 11:55</div><div class="t" style="left:132px;top:298px;line-height:14px;font-size:10px;color:#fff;transform:scaleX(0.9284);transform-origin:0 0;">29 Jun 12:35</div><div class="t" style="left:196px;top:298px;line-height:14px;font-size:10px;color:#fff;transform:scaleX(0.9284);transform-origin:0 0;">29 Jun 13:15</div><div class="t" style="left:260px;top:298px;line-height:14px;font-size:10px;color:#fff;transform:scaleX(0.9284);transform-origin:0 0;">29 Jun 13:55</div><div class="t" style="left:324px;top:298px;line-height:14px;font-size:10px;color:#fff;transform:scaleX(0.9284);transform-origin:0 0;">29 Jun 14:35</div><div class="t" style="left:388px;top:298px;line-height:14px;font-size:10px;color:#fff;transform:scaleX(0.9284);transform-origin:0 0;">29 Jun 15:15</div><div class="t" style="left:452px;top:298px;line-height:14px;font-size:10px;color:#fff;transform:scaleX(0.9284);transform-origin:0 0;">29 Jun 15:55</div><div class="t" style="left:516px;top:298px;line-height:14px;font-size:10px;color:#fff;transform:scaleX(0.9284);transform-origin:0 0;">29 Jun 16:35</div><div class="t" style="left:580px;top:298px;line-height:14px;font-size:10px;color:#fff;transform:scaleX(0.9284);transform-origin:0 0;">29 Jun 17:15</div><div class="t" style="left:644px;top:298px;line-height:14px;font-size:10px;color:#fff;transform:scaleX(0.9284);transform-origin:0 0;">29 Jun 17:55</div><div class="t" style="left:708px;top:298px;line-height:14px;font-size:10px;color:#fff;transform:scaleX(0.9284);transform-origin:0 0;">29 Jun 18:35</div><div class="t" style="left:772px;top:298px;line-height:14px;font-size:10px;color:#fff;transform:scaleX(0.9284);transform-origin:0 0;">29 Jun 19:15</div><div class="t" style="left:836px;top:298px;line-height:14px;font-size:10px;color:#fff;transform:scaleX(0.9284);transform-origin:0 0;">29 Jun 19:55</div><div class="t" style="left:900px;top:298px;line-height:14px;font-size:10px;color:#fff;transform:scaleX(0.9284);transform-origin:0 0;">29 Jun 20:35</div><div class="t" style="left:964px;top:298px;line-height:14px;font-size:10px;color:#fff;transform:scaleX(0.9284);transform-origin:0 0;">29 Jun 21:15</div><div class="t" style="left:1028px;top:298px;line-height:14px;font-size:10px;color:#fff;transform:scaleX(0.9284);transform-origin:0 0;">29 Jun 21:55</div><div class="t" style="left:1092px;top:298px;line-height:14px;font-size:10px;color:#fff;transform:scaleX(0.9284);transform-origin:0 0;">29 Jun 22:35</div><div class="t" style="left:1156px;top:298px;line-height:14px;font-size:10px;color:#fff;transform:scaleX(0.9284);transform-origin:0 0;">29 Jun 23:15</div><div class="t" style="left:1220px;top:298px;line-height:14px;font-size:10px;color:#fff;transform:scaleX(0.9284);transform-origin:0 0;">29 Jun 23:55</div><div class="t" style="left:1284px;top:298px;line-height:14px;font-size:10px;color:#fff;transform:scaleX(0.9284);transform-origin:0 0;">30 Jun 00:35</div><div class="a" style="left:0;top:316px;width:1600px;height:2px;background:#f0f0f0"></div><div class="a" style="left:0;top:318px;width:1600px;height:1px;background:#000"></div><div class="a" style="left:0;top:319px;width:1599px;height:1px;background:#fff"></div><div class="a" style="left:0;top:320px;width:1598px;height:17px;background:#f0f0f0"></div><div class="a" style="left:0;top:319px;width:2px;height:18px;background:#696969"></div><div class="a" style="left:1598px;top:319px;width:1px;height:19px;background:#fff"></div><div class="a" style="left:0;top:337px;width:1600px;height:1px;background:#fff"></div><div class="a" style="left:746px;top:316px;width:92px;height:21px;background:#fff;border-left:1px solid #000;border-right:1px solid #000;border-bottom:1px solid #000"></div><div class="t" style="left:16px;top:321px;line-height:14px;color:#606060;letter-spacing:-0.795px;">EURUSD,H4</div><div class="t" style="left:99px;top:321px;line-height:14px;color:#606060;letter-spacing:-0.295px;">USDCHF,H4</div><div class="t" style="left:185px;top:321px;line-height:14px;color:#606060;letter-spacing:-0.709px;">GBPUSD,M1</div><div class="t" style="left:272px;top:321px;line-height:14px;color:#606060;letter-spacing:-0.527px;">USDJPY,H4</div><div class="t" style="left:351px;top:321px;line-height:14px;color:#606060;letter-spacing:-0.217px;">DAX30,M5</div><div class="t" style="left:429px;top:321px;line-height:14px;color:#606060;letter-spacing:-0.378px;">DJ30,M5</div><div class="t" style="left:495px;top:321px;line-height:14px;color:#606060;letter-spacing:-0.217px;">DAX30,M5</div><div class="t" style="left:571px;top:321px;line-height:14px;color:#606060;letter-spacing:-0.377px;">XAUUSD,M5</div><div class="t" style="left:660px;top:321px;line-height:14px;color:#606060;letter-spacing:-0.226px;">EURNZD+,M5</div><div class="t" style="left:755px;top:321px;line-height:14px;letter-spacing:-0.521px;">EURGBP+,M5</div><div class="t" style="left:848px;top:321px;line-height:14px;color:#606060;letter-spacing:-0.200px;">GBPAUD+,M5</div><div class="a" style="left:90px;top:321px;width:1px;height:14px;background:#606060"></div><div class="a" style="left:174px;top:321px;width:1px;height:14px;background:#606060"></div><div class="a" style="left:262px;top:321px;width:1px;height:14px;background:#606060"></div><div class="a" style="left:342px;top:321px;width:1px;height:14px;background:#606060"></div><div class="a" style="left:418px;top:321px;width:1px;height:14px;background:#606060"></div><div class="a" style="left:486px;top:321px;width:1px;height:14px;background:#606060"></div><div class="a" style="left:562px;top:321px;width:1px;height:14px;background:#606060"></div><div class="a" style="left:650px;top:321px;width:1px;height:14px;background:#606060"></div><div class="a" style="left:935px;top:321px;width:1px;height:14px;background:#606060"></div><svg class="a" style="left:1566px;top:323px" width="30" height="10"><path d="M6 1V8.5L2.3 4.75Z" fill="#8c8c8c"/><path d="M21 1V8.5L24.7 4.75Z" fill="#8c8c8c"/></svg><div class="a" style="left:0;top:338px;width:1600px;height:498px;background:#f0f0f0"></div><div class="a" style="left:1597px;top:338px;width:1px;height:497px;background:#fff"></div><svg class="a" style="left:3px;top:344px" width="9" height="8"><path d="M1.2 1L7.8 7M7.8 1L1.2 7" stroke="#000" stroke-width="1.8"/></svg><div class="a" style="left:1px;top:356px;width:13px;height:478px;background:linear-gradient(#dde9f5,#bccbdb)"></div><div class="a" style="left:15px;top:787px;width:1px;height:46px;background:#8c8c8c"></div><div class="t" style="left:-11px;top:806px;width:40px;height:14px;transform:rotate(-90deg);font-size:12px;color:#000;text-align:center">Testeur</div><div class="a" style="left:15px;top:342px;width:1583px;height:1px;background:#a0a0a0"></div><div class="a" style="left:15px;top:342px;width:1px;height:470px;background:#a0a0a0"></div><div class="a" style="left:16px;top:343px;width:1563px;height:468px;background:#fff"></div><div class="t" style="left:22px;top:348px;line-height:14px;">Heure</div><div class="t" style="left:181px;top:348px;line-height:14px;">Message</div><div class="a" style="left:16px;top:367px;width:1563px;height:20px;background:#e9e9e9"></div><div class="a" style="left:16px;top:386px;width:1563px;height:1px;background:#d2d2d2"></div><div class="a" style="left:174px;top:367px;width:1px;height:20px;background:#d2d2d2"></div><svg class="a" style="left:19px;top:370px" width="13" height="13"><circle cx="6.5" cy="6.5" r="3.3" fill="#c4c4c4" stroke="#8a8a8a" stroke-width="1"/></svg><div class="t" style="left:37px;top:370px;line-height:14px;letter-spacing:-0.540px;">2020.06.29 23:23:50.541</div><div class="t" style="left:180px;top:370px;line-height:14px;letter-spacing:-0.086px;">There were 1 passes done during optimization</div><div class="a" style="left:16px;top:387px;width:1563px;height:20px;background:#fff"></div><div class="a" style="left:16px;top:406px;width:1563px;height:1px;background:#d2d2d2"></div><div class="a" style="left:174px;top:387px;width:1px;height:20px;background:#d2d2d2"></div><svg class="a" style="left:20px;top:390px" width="13" height="13"><path d="M6 1.2L11.6 10.8H0.4Z" fill="#e8e05a" stroke="#a09820" stroke-width="1"/><path d="M6 4.5v3.5M6 8.8v1" stroke="#6a6410" stroke-width="1.1"/></svg><div class="t" style="left:37px;top:390px;line-height:14px;letter-spacing:-0.540px;">2020.06.29 23:23:50.509</div><div class="t" style="left:180px;top:390px;line-height:14px;letter-spacing:-0.149px;">MD3LB: optimization finished in 0:00:00, 1 cache records were used</div><div class="a" style="left:16px;top:407px;width:1563px;height:20px;background:#e9e9e9"></div><div class="a" style="left:16px;top:426px;width:1563px;height:1px;background:#d2d2d2"></div><div class="a" style="left:174px;top:407px;width:1px;height:20px;background:#d2d2d2"></div><svg class="a" style="left:20px;top:410px" width="13" height="13"><path d="M6 1.2L11.6 10.8H0.4Z" fill="#e8e05a" stroke="#a09820" stroke-width="1"/><path d="M6 4.5v3.5M6 8.8v1" stroke="#6a6410" stroke-width="1.1"/></svg><div class="t" style="left:37px;top:410px;line-height:14px;letter-spacing:-0.540px;">2020.06.29 23:23:50.508</div><div class="t" style="left:180px;top:410px;line-height:14px;letter-spacing:0.008px;">MD3LB: optimization started</div><div class="a" style="left:16px;top:427px;width:1563px;height:20px;background:#fff"></div><div class="a" style="left:16px;top:446px;width:1563px;height:1px;background:#d2d2d2"></div><div class="a" style="left:174px;top:427px;width:1px;height:20px;background:#d2d2d2"></div><svg class="a" style="left:20px;top:430px" width="13" height="13"><path d="M6 1.2L11.6 10.8H0.4Z" fill="#ea5c14" stroke="#a83a08" stroke-width="1"/><path d="M4.2 9L7 3.5" stroke="#ffb890" stroke-width="0.8"/><path d="M6 4.5v3.5M6 8.8v1" stroke="#6a2004" stroke-width="1.1"/></svg><div class="t" style="left:37px;top:430px;line-height:14px;letter-spacing:-0.540px;">2020.06.29 23:23:50.423</div><div class="t" style="left:180px;top:430px;line-height:14px;letter-spacing:-0.142px;">TestGenerator: actual tick file &quot;C:\Users\jcduc\AppData\Roaming\MetaQuotes\Terminal\2F848ED77F2ED5C575A7E0D021C77C0B\tester\history\DJ305_0.fxt&quot; found</div><div class="a" style="left:16px;top:447px;width:1563px;height:20px;background:#e9e9e9"></div><div class="a" style="left:16px;top:466px;width:1563px;height:1px;background:#d2d2d2"></div><div class="a" style="left:174px;top:447px;width:1px;height:20px;background:#d2d2d2"></div><svg class="a" style="left:20px;top:450px" width="13" height="13"><path d="M6 1.2L11.6 10.8H0.4Z" fill="#ea5c14" stroke="#a83a08" stroke-width="1"/><path d="M4.2 9L7 3.5" stroke="#ffb890" stroke-width="0.8"/><path d="M6 4.5v3.5M6 8.8v1" stroke="#6a2004" stroke-width="1.1"/></svg><div class="t" style="left:37px;top:450px;line-height:14px;letter-spacing:-0.540px;">2020.06.29 23:23:50.363</div><div class="t" style="left:180px;top:450px;line-height:14px;letter-spacing:-0.138px;">Tester: cache file &quot;C:\Users\jcduc\AppData\Roaming\MetaQuotes\Terminal\2F848ED77F2ED5C575A7E0D021C77C0B\tester\caches\MD3LB.DJ305.0&quot; found and can be used for further optimization</div><div class="a" style="left:16px;top:467px;width:1563px;height:20px;background:#fff"></div><div class="a" style="left:16px;top:486px;width:1563px;height:1px;background:#d2d2d2"></div><div class="a" style="left:174px;top:467px;width:1px;height:20px;background:#d2d2d2"></div><svg class="a" style="left:19px;top:470px" width="13" height="13"><circle cx="6.5" cy="6.5" r="3.3" fill="#c4c4c4" stroke="#8a8a8a" stroke-width="1"/></svg><div class="t" style="left:37px;top:470px;line-height:14px;letter-spacing:-0.540px;">2020.06.29 23:23:14.762</div><div class="t" style="left:180px;top:470px;line-height:14px;letter-spacing:-0.109px;">There were 1 passes done during optimization</div><div class="a" style="left:16px;top:487px;width:1563px;height:20px;background:#e9e9e9"></div><div class="a" style="left:16px;top:506px;width:1563px;height:1px;background:#d2d2d2"></div><div class="a" style="left:174px;top:487px;width:1px;height:20px;background:#d2d2d2"></div><svg class="a" style="left:20px;top:490px" width="13" height="13"><path d="M6 1.2L11.6 10.8H0.4Z" fill="#e8e05a" stroke="#a09820" stroke-width="1"/><path d="M6 4.5v3.5M6 8.8v1" stroke="#6a6410" stroke-width="1.1"/></svg><div class="t" style="left:37px;top:490px;line-height:14px;letter-spacing:-0.540px;">2020.06.29 23:23:14.687</div><div class="t" style="left:180px;top:490px;line-height:14px;letter-spacing:-0.066px;">MD3LB: optimization finished in 0:00:04</div><div class="a" style="left:16px;top:507px;width:1563px;height:20px;background:#fff"></div><div class="a" style="left:16px;top:526px;width:1563px;height:1px;background:#d2d2d2"></div><div class="a" style="left:174px;top:507px;width:1px;height:20px;background:#d2d2d2"></div><svg class="a" style="left:20px;top:510px" width="13" height="13"><path d="M6 1.2L11.6 10.8H0.4Z" fill="#e8e05a" stroke="#a09820" stroke-width="1"/><path d="M6 4.5v3.5M6 8.8v1" stroke="#6a6410" stroke-width="1.1"/></svg><div class="t" style="left:37px;top:510px;line-height:14px;letter-spacing:-0.540px;">2020.06.29 23:23:10.278</div><div class="t" style="left:180px;top:510px;line-height:14px;letter-spacing:0.008px;">MD3LB: optimization started</div><div class="a" style="left:16px;top:527px;width:1563px;height:20px;background:#e9e9e9"></div><div class="a" style="left:16px;top:546px;width:1563px;height:1px;background:#d2d2d2"></div><div class="a" style="left:174px;top:527px;width:1px;height:20px;background:#d2d2d2"></div><svg class="a" style="left:19px;top:530px" width="13" height="13"><circle cx="6.5" cy="6.5" r="3.3" fill="#c4c4c4" stroke="#8a8a8a" stroke-width="1"/></svg><div class="t" style="left:37px;top:530px;line-height:14px;letter-spacing:-0.540px;">2020.06.29 23:23:07.854</div><div class="t" style="left:180px;top:530px;line-height:14px;letter-spacing:-0.238px;">TestGenerator: current spread 364 used</div><div class="a" style="left:16px;top:547px;width:1563px;height:20px;background:#fff"></div><div class="a" style="left:16px;top:566px;width:1563px;height:1px;background:#d2d2d2"></div><div class="a" style="left:174px;top:547px;width:1px;height:20px;background:#d2d2d2"></div><svg class="a" style="left:19px;top:550px" width="13" height="13"><circle cx="6.5" cy="6.5" r="3.3" fill="#c4c4c4" stroke="#8a8a8a" stroke-width="1"/></svg><div class="t" style="left:37px;top:550px;line-height:14px;letter-spacing:-0.540px;">2020.06.29 23:23:07.802</div><div class="t" style="left:180px;top:550px;line-height:14px;letter-spacing:-0.248px;">Expert MD3LB DJ30,M5: loaded successfully</div><div class="a" style="left:16px;top:567px;width:1563px;height:20px;background:#e9e9e9"></div><div class="a" style="left:16px;top:586px;width:1563px;height:1px;background:#d2d2d2"></div><div class="a" style="left:174px;top:567px;width:1px;height:20px;background:#d2d2d2"></div><svg class="a" style="left:19px;top:570px" width="13" height="13"><circle cx="6.5" cy="6.5" r="3.3" fill="#c4c4c4" stroke="#8a8a8a" stroke-width="1"/></svg><div class="t" style="left:37px;top:570px;line-height:14px;letter-spacing:-0.540px;">2020.06.29 23:23:07.710</div><div class="t" style="left:180px;top:570px;line-height:14px;letter-spacing:-0.218px;">Expert MACD Sample DAX30,M5: removed</div><div class="a" style="left:16px;top:587px;width:1563px;height:20px;background:#fff"></div><div class="a" style="left:16px;top:606px;width:1563px;height:1px;background:#d2d2d2"></div><div class="a" style="left:174px;top:587px;width:1px;height:20px;background:#d2d2d2"></div><svg class="a" style="left:19px;top:590px" width="13" height="13"><circle cx="6.5" cy="6.5" r="3.3" fill="#c4c4c4" stroke="#8a8a8a" stroke-width="1"/></svg><div class="t" style="left:37px;top:590px;line-height:14px;letter-spacing:-0.540px;">2020.06.29 23:20:47.247</div><div class="t" style="left:180px;top:590px;line-height:14px;letter-spacing:-0.120px;">There were 1 passes done during optimization, 1 results have been discarded as insignificant</div><div class="a" style="left:16px;top:607px;width:1563px;height:20px;background:#e9e9e9"></div><div class="a" style="left:16px;top:626px;width:1563px;height:1px;background:#d2d2d2"></div><div class="a" style="left:174px;top:607px;width:1px;height:20px;background:#d2d2d2"></div><svg class="a" style="left:20px;top:610px" width="13" height="13"><path d="M6 1.2L11.6 10.8H0.4Z" fill="#e8e05a" stroke="#a09820" stroke-width="1"/><path d="M6 4.5v3.5M6 8.8v1" stroke="#6a6410" stroke-width="1.1"/></svg><div class="t" style="left:37px;top:610px;line-height:14px;letter-spacing:-0.540px;">2020.06.29 23:20:47.140</div><div class="t" style="left:180px;top:610px;line-height:14px;letter-spacing:-0.076px;">MACD Sample: optimization finished in 0:00:02</div><div class="a" style="left:16px;top:627px;width:1563px;height:20px;background:#fff"></div><div class="a" style="left:16px;top:646px;width:1563px;height:1px;background:#d2d2d2"></div><div class="a" style="left:174px;top:627px;width:1px;height:20px;background:#d2d2d2"></div><svg class="a" style="left:20px;top:630px" width="13" height="13"><path d="M6 1.2L11.6 10.8H0.4Z" fill="#e8e05a" stroke="#a09820" stroke-width="1"/><path d="M6 4.5v3.5M6 8.8v1" stroke="#6a6410" stroke-width="1.1"/></svg><div class="t" style="left:37px;top:630px;line-height:14px;letter-spacing:-0.540px;">2020.06.29 23:20:44.299</div><div class="t" style="left:180px;top:630px;line-height:14px;letter-spacing:-0.020px;">MACD Sample: optimization started</div><div class="a" style="left:16px;top:647px;width:1563px;height:20px;background:#e9e9e9"></div><div class="a" style="left:16px;top:666px;width:1563px;height:1px;background:#d2d2d2"></div><div class="a" style="left:174px;top:647px;width:1px;height:20px;background:#d2d2d2"></div><svg class="a" style="left:19px;top:650px" width="13" height="13"><circle cx="6.5" cy="6.5" r="3.3" fill="#c4c4c4" stroke="#8a8a8a" stroke-width="1"/></svg><div class="t" style="left:37px;top:650px;line-height:14px;letter-spacing:-0.540px;">2020.06.29 23:20:44.060</div><div class="t" style="left:180px;top:650px;line-height:14px;letter-spacing:-0.238px;">TestGenerator: current spread 171 used</div><div class="a" style="left:16px;top:667px;width:1563px;height:20px;background:#fff"></div><div class="a" style="left:16px;top:686px;width:1563px;height:1px;background:#d2d2d2"></div><div class="a" style="left:174px;top:667px;width:1px;height:20px;background:#d2d2d2"></div><svg class="a" style="left:19px;top:670px" width="13" height="13"><circle cx="6.5" cy="6.5" r="3.3" fill="#c4c4c4" stroke="#8a8a8a" stroke-width="1"/></svg><div class="t" style="left:37px;top:670px;line-height:14px;letter-spacing:-0.540px;">2020.06.29 23:18:51.139</div><div class="t" style="left:180px;top:670px;line-height:14px;letter-spacing:-0.120px;">There were 1 passes done during optimization, 1 results have been discarded as insignificant</div><div class="a" style="left:16px;top:687px;width:1563px;height:20px;background:#e9e9e9"></div><div class="a" style="left:16px;top:706px;width:1563px;height:1px;background:#d2d2d2"></div><div class="a" style="left:174px;top:687px;width:1px;height:20px;background:#d2d2d2"></div><svg class="a" style="left:20px;top:690px" width="13" height="13"><path d="M6 1.2L11.6 10.8H0.4Z" fill="#e8e05a" stroke="#a09820" stroke-width="1"/><path d="M6 4.5v3.5M6 8.8v1" stroke="#6a6410" stroke-width="1.1"/></svg><div class="t" style="left:37px;top:690px;line-height:14px;letter-spacing:-0.540px;">2020.06.29 23:18:51.055</div><div class="t" style="left:180px;top:690px;line-height:14px;letter-spacing:-0.076px;">MACD Sample: optimization finished in 0:00:02</div><div class="a" style="left:16px;top:707px;width:1563px;height:20px;background:#fff"></div><div class="a" style="left:16px;top:726px;width:1563px;height:1px;background:#d2d2d2"></div><div class="a" style="left:174px;top:707px;width:1px;height:20px;background:#d2d2d2"></div><svg class="a" style="left:20px;top:710px" width="13" height="13"><path d="M6 1.2L11.6 10.8H0.4Z" fill="#e8e05a" stroke="#a09820" stroke-width="1"/><path d="M6 4.5v3.5M6 8.8v1" stroke="#6a6410" stroke-width="1.1"/></svg><div class="t" style="left:37px;top:710px;line-height:14px;letter-spacing:-0.540px;">2020.06.29 23:18:48.361</div><div class="t" style="left:180px;top:710px;line-height:14px;letter-spacing:-0.020px;">MACD Sample: optimization started</div><div class="a" style="left:16px;top:727px;width:1563px;height:20px;background:#e9e9e9"></div><div class="a" style="left:16px;top:746px;width:1563px;height:1px;background:#d2d2d2"></div><div class="a" style="left:174px;top:727px;width:1px;height:20px;background:#d2d2d2"></div><svg class="a" style="left:19px;top:730px" width="13" height="13"><circle cx="6.5" cy="6.5" r="6" fill="#e81818" stroke="#a00000" stroke-width="0.8"/><rect x="3" y="5.3" width="7" height="2.4" fill="#fff"/></svg><div class="t" style="left:37px;top:730px;line-height:14px;letter-spacing:-0.540px;">2020.06.29 23:18:48.228</div><div class="t" style="left:180px;top:730px;line-height:14px;letter-spacing:-0.182px;">TestGenerator: unmatched data error (volume limit 897 at 2020.06.26 22:25 exceeded)</div><div class="a" style="left:16px;top:747px;width:1563px;height:20px;background:#fff"></div><div class="a" style="left:16px;top:766px;width:1563px;height:1px;background:#d2d2d2"></div><div class="a" style="left:174px;top:747px;width:1px;height:20px;background:#d2d2d2"></div><svg class="a" style="left:19px;top:750px" width="13" height="13"><circle cx="6.5" cy="6.5" r="6" fill="#e81818" stroke="#a00000" stroke-width="0.8"/><rect x="3" y="5.3" width="7" height="2.4" fill="#fff"/></svg><div class="t" style="left:37px;top:750px;line-height:14px;letter-spacing:-0.540px;">2020.06.29 23:18:48.182</div><div class="t" style="left:180px;top:750px;line-height:14px;letter-spacing:-0.182px;">TestGenerator: unmatched data error (volume limit 202 at 2020.06.26 09:35 exceeded)</div><div class="a" style="left:16px;top:767px;width:1563px;height:20px;background:#e9e9e9"></div><div class="a" style="left:16px;top:786px;width:1563px;height:1px;background:#d2d2d2"></div><div class="a" style="left:174px;top:767px;width:1px;height:20px;background:#d2d2d2"></div><svg class="a" style="left:19px;top:770px" width="13" height="13"><circle cx="6.5" cy="6.5" r="6" fill="#e81818" stroke="#a00000" stroke-width="0.8"/><rect x="3" y="5.3" width="7" height="2.4" fill="#fff"/></svg><div class="t" style="left:37px;top:770px;line-height:14px;letter-spacing:-0.540px;">2020.06.29 23:18:48.166</div><div class="t" style="left:180px;top:770px;line-height:14px;letter-spacing:-0.188px;">TestGenerator: unmatched data error (volume limit 1739 at 2020.06.25 16:55 exceeded)</div><div class="a" style="left:16px;top:787px;width:1563px;height:20px;background:#fff"></div><div class="a" style="left:16px;top:806px;width:1563px;height:1px;background:#d2d2d2"></div><div class="a" style="left:174px;top:787px;width:1px;height:20px;background:#d2d2d2"></div><svg class="a" style="left:19px;top:790px" width="13" height="13"><circle cx="6.5" cy="6.5" r="3.3" fill="#c4c4c4" stroke="#8a8a8a" stroke-width="1"/></svg><div class="t" style="left:37px;top:790px;line-height:14px;letter-spacing:-0.540px;">2020.06.29 23:18:48.090</div><div class="t" style="left:180px;top:790px;line-height:14px;letter-spacing:-0.238px;">TestGenerator: current spread 171 used</div><div class="a" style="left:16px;top:807px;width:1563px;height:4px;background:#e9e9e9"></div><div class="a" style="left:174px;top:807px;width:1px;height:4px;background:#d2d2d2"></div><div class="a" style="left:16px;top:367px;width:1563px;height:1px;background:#c8c8c8"></div><div class="a" style="left:175px;top:343px;width:1px;height:24px;background:#e5e5e5"></div><div class="a" style="left:1579px;top:343px;width:1px;height:468px;background:#fff"></div><div class="a" style="left:1580px;top:343px;width:17px;height:468px;background:#f0f0f0"></div><svg class="a" style="left:1583px;top:348px" width="10" height="8"><path d="M1 6.5L5 2.5L9 6.5" fill="none" stroke="#606060" stroke-width="2"/></svg><div class="a" style="left:1580px;top:360px;width:15px;height:199px;background:#cdcdcd"></div><svg class="a" style="left:1583px;top:799px" width="10" height="8"><path d="M1 1.5L5 5.5L9 1.5" fill="none" stroke="#606060" stroke-width="2"/></svg><div class="a" style="left:15px;top:811px;width:1582px;height:1px;background:#000"></div><div class="a" style="left:15px;top:812px;width:1px;height:21px;background:#a0a0a0"></div><div class="a" style="left:416px;top:811px;width:59px;height:21px;background:#fff;border-left:1px solid #000;border-right:1px solid #000;border-bottom:1px solid #000"></div><div class="t" style="left:27px;top:814px;line-height:14px;color:#606060;letter-spacing:0.279px;">Configurations</div><div class="t" style="left:126px;top:814px;line-height:14px;color:#606060;letter-spacing:0.023px;">Optimisation des résultats</div><div class="t" style="left:283px;top:814px;line-height:14px;color:#606060;letter-spacing:0.199px;">Optimsation graphique</div><div class="t" style="left:425px;top:814px;line-height:14px;letter-spacing:0.007px;">Journal</div><div class="a" style="left:117px;top:815px;width:1px;height:14px;background:#606060"></div><div class="a" style="left:274px;top:815px;width:1px;height:14px;background:#606060"></div><div class="a" style="left:16px;top:812px;width:1581px;height:1px;background:#fff"></div><div class="a" style="left:0;top:833px;width:1598px;height:1px;background:#fff"></div><div class="a" style="left:0;top:836px;width:1600px;height:1px;background:#a0a0a0"></div><div class="a" style="left:0;top:837px;width:1600px;height:1px;background:#fff"></div><div class="a" style="left:0;top:838px;width:1600px;height:22px;background:#f0f0f0"></div><div class="t" style="left:2px;top:843px;line-height:14px;letter-spacing:-0.195px;">Experts</div><div class="a" style="left:906px;top:839px;width:1px;height:20px;background:#a0a0a0"></div><div class="a" style="left:1022px;top:839px;width:1px;height:20px;background:#a0a0a0"></div><div class="a" style="left:1124px;top:839px;width:1px;height:20px;background:#a0a0a0"></div><div class="a" style="left:1195px;top:839px;width:1px;height:20px;background:#a0a0a0"></div><div class="a" style="left:1266px;top:839px;width:1px;height:20px;background:#a0a0a0"></div><div class="a" style="left:1334px;top:839px;width:1px;height:20px;background:#a0a0a0"></div><div class="a" style="left:1404px;top:839px;width:1px;height:20px;background:#a0a0a0"></div><div class="a" style="left:1470px;top:839px;width:1px;height:20px;background:#a0a0a0"></div><div class="t" style="left:912px;top:843px;line-height:14px;letter-spacing:0.164px;">Default</div><svg class="a" style="left:1476px;top:843px" width="24" height="13" shape-rendering="crispEdges"><rect x="0" y="0" width="2" height="9" fill="#4a7000"/><rect x="0" y="10" width="2" height="3" fill="#002a4a"/><rect x="3" y="0" width="2" height="8" fill="#4a7000"/><rect x="3" y="9" width="2" height="4" fill="#002a4a"/><rect x="6" y="0" width="2" height="7" fill="#4a7000"/><rect x="6" y="8" width="2" height="5" fill="#002a4a"/><rect x="9" y="0" width="2" height="6" fill="#4a7000"/><rect x="9" y="7" width="2" height="6" fill="#002a4a"/><rect x="12" y="0" width="2" height="5" fill="#4a7000"/><rect x="12" y="6" width="2" height="7" fill="#002a4a"/><rect x="15" y="0" width="2" height="4" fill="#4a7000"/><rect x="15" y="5" width="2" height="8" fill="#002a4a"/><rect x="18" y="0" width="2" height="3" fill="#4a7000"/><rect x="18" y="4" width="2" height="9" fill="#002a4a"/><rect x="21" y="0" width="2" height="2" fill="#4a7000"/><rect x="21" y="3" width="2" height="10" fill="#002a4a"/></svg><div class="a" style="left:1471px;top:839px;width:1px;height:20px;background:#fff"></div><div class="t" style="left:1503px;top:843px;line-height:14px;letter-spacing:-0.014px;">44112/13 kb</div><div class="a" style="left:0;top:860px;width:1600px;height:40px;background:linear-gradient(to right,#1f3540 0%,#1f3440 40%,#1d2f45 70%,#1b2a48 100%)"></div><svg class="a" style="left:16px;top:872px" width="17" height="17" viewBox="0 0 17 17"><path d="M0 2.3L6.8 1.3V7.8H0Z M7.8 1.2L16.5 0V7.8H7.8Z M0 8.8H6.8V15.4L0 14.4Z M7.8 8.8H16.5V16.6L7.8 15.4Z" fill="#fff"/></svg><div class="a" style="left:48px;top:860px;width:344px;height:40px;background:#f0f0f0;border-top:1px solid #d0d0d0"></div><svg class="a" style="left:59px;top:871px" width="19" height="19" viewBox="0 0 19 19"><circle cx="11.5" cy="7" r="5.5" fill="none" stroke="#000" stroke-width="1.2"/><path d="M7.6 11L1 17.5" stroke="#000" stroke-width="1.3"/></svg><div class="t" style="left:88px;top:872px;line-height:17px;font-size:15px;letter-spacing:-0.040px;">Taper ici pour rechercher</div><svg class="a" style="left:407px;top:871px" width="18" height="18" viewBox="0 0 18 18"><circle cx="9" cy="9" r="7" fill="none" stroke="#fff" stroke-width="2"/></svg><svg class="a" style="left:455px;top:871px" width="19" height="17" viewBox="0 0 19 17"><rect x="2.5" y="4.5" width="9" height="8" fill="none" stroke="#fff" stroke-width="1"/><path d="M1 1.5h12M1 15.5h12M15.5 1v3M15.5 6.5v4M15.5 13v3" stroke="#fff" stroke-width="1"/></svg><svg class="a" style="left:502px;top:866px" width="25" height="26" viewBox="0 0 25 26"><path d="M9 7V4a3.5 3.5 0 0 1 7 0v3" fill="none" stroke="#fff" stroke-width="1.6"/><rect x="1" y="7" width="23" height="18" rx="2" fill="#fff"/><rect x="7" y="11" width="5" height="5" fill="#f25022"/><rect x="13" y="11" width="5" height="5" fill="#7fba00"/><rect x="7" y="17" width="5" height="5" fill="#00a4ef"/><rect x="13" y="17" width="5" height="5" fill="#ffb900"/></svg><svg class="a" style="left:551px;top:868px" width="26" height="23" viewBox="0 0 26 23"><path d="M1 8L13 1L25 8V22H1Z" fill="#1a73d8"/><path d="M1 8L13 15L25 8V22H1Z" fill="#30a8f0"/><path d="M5 6h16v6l-8 4-8-4z" fill="#fff"/><path d="M1 22L13 13L25 22Z" fill="#58c0f8"/></svg><svg class="a" style="left:601px;top:869px" width="24" height="21" viewBox="0 0 24 21"><path d="M1 2h8l2 2h12v16H1Z" fill="#e8b828"/><path d="M1 6h22v14H1Z" fill="#f8d870"/><rect x="8" y="12" width="9" height="8" fill="#2a86d8"/><rect x="10" y="15" width="5" height="5" fill="#f8d870"/></svg><div class="a" style="left:593px;top:897px;width:40px;height:3px;background:#99d1f0"></div><svg class="a" style="left:649px;top:866px" width="26" height="22" viewBox="0 0 26 22"><path d="M7 1L1 5l6 4 6-4zM19 1l-6 4 6 4 6-4zM1 13l6 4 6-4-6-4zM25 13l-6-4-6 4 6 4zM7 18.5l6 3.5 6-3.5-6-4z" fill="#fff"/></svg><svg class="a" style="left:703px;top:866px" width="15" height="26" viewBox="0 0 15 26"><path d="M11 1L2 12l6 2-6 11 11-12-6-2z" fill="#fff"/></svg><svg class="a" style="left:748px;top:868px" width="24" height="23" viewBox="0 0 24 23"><circle cx="12" cy="11.5" r="10.5" fill="#1aa0e8"/><text x="12" y="17" font-size="15" font-weight="bold" fill="#fff" text-anchor="middle" font-family="Liberation Sans">S</text></svg><svg class="a" style="left:796px;top:867px" width="26" height="26" viewBox="0 0 26 26"><defs><linearGradient id="eg" x1="0" y1="0" x2="1" y2="0.3"><stop offset="0" stop-color="#38b8f0"/><stop offset="0.5" stop-color="#2cc0c8"/><stop offset="1" stop-color="#70e050"/></linearGradient><linearGradient id="eg2" x1="0" y1="0" x2="0" y2="1"><stop offset="0" stop-color="#1a90e0"/><stop offset="1" stop-color="#0a58b0"/></linearGradient></defs><circle cx="12.5" cy="12.5" r="12" fill="url(#eg)"/><path d="M0.5 13a12 12 0 0 0 20 9.5c-4 1.5-9 0-10.5-4-1-3 0-7 3-8-5-2-11 0-12.5 2.5z" fill="url(#eg2)"/><circle cx="12" cy="13" r="3" fill="#1f3440"/><path d="M15 10.5c3 1 4 4 2 6l-4-1z" fill="#4ad060"/></svg><div class="a" style="left:789px;top:897px;width:40px;height:3px;background:#99d1f0"></div><svg class="a" style="left:845px;top:868px" width="25" height="25" viewBox="0 0 25 25"><circle cx="12.5" cy="12.5" r="11.5" fill="#db4437"/><path d="M12.5 12.5L2.5 18.3A11.5 11.5 0 0 0 18.2 22.5Z" fill="#0f9d58"/><path d="M12.5 12.5L18.2 22.5A11.5 11.5 0 0 0 24 12.5H12.5Z M12.5 6.9H24A11.5 11.5 0 0 1 24 12.5Z" fill="#ffcd40"/><path d="M12.5 12.5 L24 12.5 A11.5 11.5 0 0 0 22.5 6.9 L12.5 6.9Z" fill="#ffcd40"/><circle cx="12.5" cy="12.5" r="5.3" fill="#fff"/><circle cx="12.5" cy="12.5" r="4.2" fill="#4285f4"/></svg><div class="a" style="left:838px;top:897px;width:40px;height:3px;background:#99d1f0"></div><svg class="a" style="left:896px;top:869px" width="22" height="22" viewBox="0 0 22 22"><g transform="translate(11 11)" fill="#fff"><circle r="7.5"/><rect x="-2" y="-10.5" width="4" height="5" transform="rotate(0)"/><rect x="-2" y="-10.5" width="4" height="5" transform="rotate(45)"/><rect x="-2" y="-10.5" width="4" height="5" transform="rotate(90)"/><rect x="-2" y="-10.5" width="4" height="5" transform="rotate(135)"/><rect x="-2" y="-10.5" width="4" height="5" transform="rotate(180)"/><rect x="-2" y="-10.5" width="4" height="5" transform="rotate(225)"/><rect x="-2" y="-10.5" width="4" height="5" transform="rotate(270)"/><rect x="-2" y="-10.5" width="4" height="5" transform="rotate(315)"/><circle r="3.3" fill="#1f3240"/></g></svg><svg class="a" style="left:944px;top:868px" width="24" height="24" viewBox="0 0 24 24"><rect x="9" y="3" width="14" height="18" fill="#fff" stroke="#1d7044"/><path d="M11 7h10M11 11h10M11 15h10M16 3v18" stroke="#1d7044"/><path d="M1 2.5L14 0V24L1 21.5Z" fill="#1d7044"/><text x="7.5" y="16" font-size="10" font-weight="bold" fill="#fff" text-anchor="middle" font-family="Liberation Sans">X</text></svg><div class="a" style="left:936px;top:897px;width:40px;height:3px;background:#99d1f0"></div><svg class="a" style="left:993px;top:868px" width="24" height="24" viewBox="0 0 24 24"><rect width="24" height="24" fill="#2a7ae2"/><path d="M5 17h14v2H5z M6 15l11-7 1 1.5-9.5 5.5z" fill="#fff"/></svg><div class="a" style="left:1030px;top:860px;width:48px;height:40px;background:#58646e"></div><svg class="a" style="left:1042px;top:868px" width="24" height="24" viewBox="0 0 24 24"><rect width="24" height="24" fill="#e81c2a"/><path d="M1.8 3.2H22.6L12.1 21Z" fill="#fff"/><path d="M9.9 7.8H20.6L19.9 9.3H13.9L11.3 15.8Z" fill="#e81c2a"/><path d="M7.3 3L11.2 16" stroke="#e81c2a" stroke-width="1.1"/></svg><div class="a" style="left:1030px;top:897px;width:48px;height:3px;background:#99d1f0"></div><svg class="a" style="left:1090px;top:867px" width="26" height="25" viewBox="0 0 26 25"><path d="M1 13L13 19.5 25 14V17L13 23.8 1 16.3Z" fill="#e0b818"/><path d="M1 13L8.5 1.5 23 11 25 14 13 19.5Z" fill="#f4ecd0"/><path d="M9 2l14 9.5M10 3.5l13.5 9" stroke="#c8b890" stroke-width="0.6"/><path d="M7 11a4.5 4.5 0 0 1 4.5-4.5V15.5A4.5 4.5 0 0 1 7 11Z" fill="#2a9a3a"/><path d="M11.5 6.5a4.5 4.5 0 0 1 0 9Z" fill="#2a80d0"/><path d="M10 13l1.5-3 1.5 3z" fill="#f0d040"/></svg><div class="a" style="left:1083px;top:897px;width:40px;height:3px;background:#99d1f0"></div><svg class="a" style="left:1140px;top:868px" width="24" height="24" viewBox="0 0 24 24"><rect x="9" y="3" width="14" height="18" fill="#fff" stroke="#2b579a"/><path d="M11 7h10M11 10h10M11 13h10M11 16h10" stroke="#2b579a"/><path d="M1 2.5L14 0V24L1 21.5Z" fill="#2b579a"/><text x="7.5" y="16" font-size="9" font-weight="bold" fill="#fff" text-anchor="middle" font-family="Liberation Sans">W</text></svg><div class="a" style="left:1132px;top:897px;width:40px;height:3px;background:#99d1f0"></div><svg class="a" style="left:1294px;top:869px" width="25" height="24" viewBox="0 0 25 24"><circle cx="11" cy="11" r="10" fill="#1e9ae0" stroke="#fff" stroke-width="1.6"/><text x="11" y="17" font-size="15" font-weight="bold" fill="#fff" text-anchor="middle" font-family="Liberation Sans">?</text><circle cx="19" cy="18" r="5" fill="#1e9ae0" stroke="#1f2f45"/><rect x="18.2" y="16.5" width="1.8" height="4.5" fill="#fff"/><rect x="18.2" y="14.3" width="1.8" height="1.5" fill="#fff"/></svg><svg class="a" style="left:1326px;top:875px" width="14" height="9" viewBox="0 0 14 9"><path d="M1 8L7 2L13 8" fill="none" stroke="#fff" stroke-width="1.4"/></svg><svg class="a" style="left:1348px;top:873px" width="18" height="13" viewBox="0 0 18 13"><path d="M1 3h2M1 5h2M3 2v5l1 1h2" stroke="#fff" fill="none" stroke-width="1.1"/><rect x="5.5" y="3.5" width="11" height="8" fill="none" stroke="#fff" stroke-width="1.2"/><rect x="7" y="5" width="8" height="5" fill="#fff"/></svg><svg class="a" style="left:1372px;top:874px" width="19" height="13" viewBox="0 0 19 13"><path d="M3 12a3 3 0 0 1 0-6 5 5 0 0 1 9-2 4 4 0 0 1 4 4 2.5 2.5 0 0 1 0 4z" fill="#e8e8e8"/></svg><svg class="a" style="left:1399px;top:873px" width="15" height="15" viewBox="0 0 15 15"><path d="M1 14a13 13 0 0 1 13-13M4 14a10 10 0 0 1 10-10M7 14a7 7 0 0 1 7-7" fill="none" stroke="#fff" stroke-width="1.1"/><circle cx="12.5" cy="12.5" r="1.7" fill="#fff"/></svg><svg class="a" style="left:1419px;top:872px" width="19" height="17" viewBox="0 0 19 17"><path d="M1 6h3l5-4v13l-5-4H1z" fill="none" stroke="#fff" stroke-width="1.1"/><path d="M11.5 6a3 3 0 0 1 0 5M13.5 4a6 6 0 0 1 0 9M15.5 2a9 9 0 0 1 0 13" fill="none" stroke="#fff" stroke-width="1.1"/></svg><div class="t" style="left:1448px;top:873px;line-height:15px;color:#fff;letter-spacing:-0.500px;">FRA</div><div class="t" style="left:1498px;top:865px;line-height:15px;color:#fff;letter-spacing:-0.254px;">23:43</div><div class="t" style="left:1483px;top:882px;line-height:15px;color:#fff;letter-spacing:-0.003px;">29/06/2020</div><svg class="a" style="left:1557px;top:870px" width="30" height="27" viewBox="0 0 30 27"><path d="M2 2h16v11h-9l-4 4v-4H2z" fill="#fff"/><path d="M5 5h10M5 7.5h10M5 10h7" stroke="#1b2a48" stroke-width="1"/><circle cx="18" cy="17" r="8" fill="#2a2a2a" stroke="#aaa" stroke-width="1"/><text x="18" y="21.5" font-size="12" font-weight="bold" fill="#fff" text-anchor="middle" font-family="Liberation Sans">2</text></svg><div class="a" style="left:1596px;top:860px;width:1px;height:40px;background:#5a6678"></div></body></html>
